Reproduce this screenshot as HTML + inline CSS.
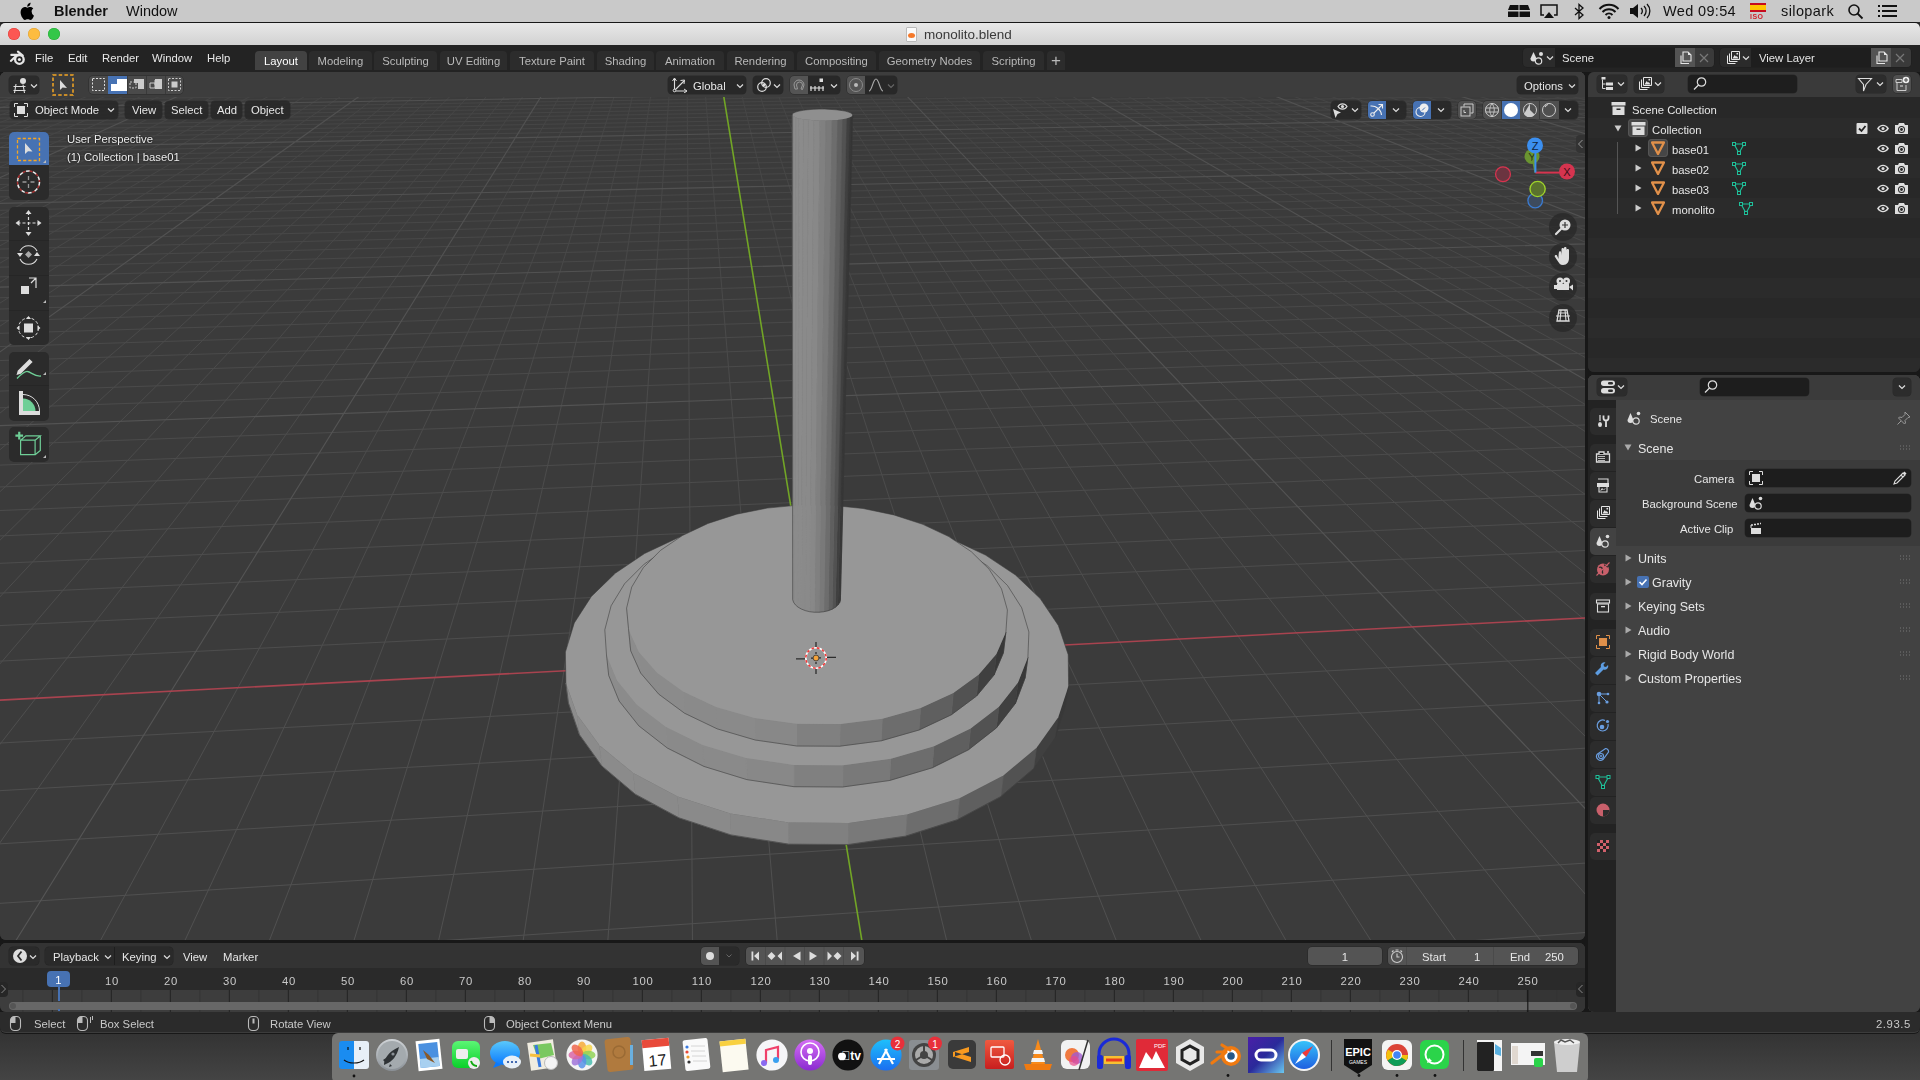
<!DOCTYPE html>
<html><head><meta charset="utf-8">
<style>
*{box-sizing:border-box}
html,body{margin:0;padding:0}
body{width:1920px;height:1080px;position:relative;overflow:hidden;background:#3b3b3b;font-family:"Liberation Sans",sans-serif;font-size:12px;color:#e6e6e6}
.a{position:absolute}
.t{position:absolute;white-space:nowrap;line-height:1}
.mb{position:absolute;white-space:nowrap;line-height:1;font-size:14px;color:#111;top:4px}
.tb{position:absolute;white-space:nowrap;line-height:1;font-size:11.3px;color:#e8e8e8;top:53px}
.tab{position:absolute;top:51px;height:19px;background:#2c2c2c;border-radius:4px 4px 0 0;color:#b9b9b9;font-size:11.3px;text-align:center;line-height:20px;white-space:nowrap}
.bt{position:absolute;background:#2b2b2b;border-radius:4px;box-shadow:0 0 0 .5px rgba(24,24,24,.5)}
.ic{position:absolute}
.t,.tb,.mb,.tab{will-change:transform}
</style></head><body>
<!-- desktop -->
<div class="a" style="left:0;top:0;width:1920px;height:1080px;background:linear-gradient(180deg,#2e2e2e 0,#333 1033px,#444 1080px)"></div>
<!-- mac menubar -->
<div class="a" id="menubar" style="left:0;top:0;width:1920px;height:22px;background:#c9c9c9"></div>
<svg class="ic" style="left:20px;top:2px" width="16" height="18" viewBox="0 0 16 18"><path d="M11.6 9.6c0-2 1.6-2.9 1.7-3-1-1.4-2.4-1.6-2.9-1.6-1.2-.1-2.4.7-3 .7-.6 0-1.6-.7-2.6-.7C3.400 5.1 2 6 1.3 7.300c-1.5 2.600-.4 6.400 1.100 8.500.7 1 1.500 2.200 2.600 2.100 1-.1 1.400-.7 2.700-.7s1.600.7 2.700.7c1.100 0 1.800-1 2.500-2 .8-1.100 1.100-2.200 1.100-2.300 0 0-2.200-.8-2.200-3.300zM9.700 3.500c.6-.7 1-1.700.9-2.700-.8 0-1.900.6-2.500 1.300-.6.600-1 1.600-.9 2.600.9.1 1.900-.5 2.500-1.200z" fill="#000"/></svg>
<div class="mb" style="left:54px;font-weight:bold;font-size:14.5px">Blender</div>
<div class="mb" style="left:126px;font-size:14.5px">Window</div>
<!-- right menubar icons -->
<svg class="ic" style="left:1507px;top:4px" width="24" height="14" viewBox="0 0 24 14"><path d="M3 1h18l2 5H1z M1 7h22v6H1z" fill="#111"/><path d="M12 1v12 M1 7h22" stroke="#cbcbcb" stroke-width="1"/></svg>
<svg class="ic" style="left:1539px;top:4px" width="20" height="15" viewBox="0 0 20 15"><path d="M5 11H2V1h16v10h-3" fill="none" stroke="#111" stroke-width="1.5"/><path d="M10 8l5 6H5z" fill="#111"/></svg>
<svg class="ic" style="left:1573px;top:3px" width="12" height="17" viewBox="0 0 12 17"><path d="M2 5l8 7-4 3.5V1.5l4 3.5-8 7" fill="none" stroke="#111" stroke-width="1.3"/></svg>
<svg class="ic" style="left:1598px;top:3px" width="22" height="16" viewBox="0 0 22 16"><path d="M1.5 6a13 13 0 0 1 19 0M4.5 9a9 9 0 0 1 13 0M7.5 12a5 5 0 0 1 7 0" fill="none" stroke="#111" stroke-width="2"/><circle cx="11" cy="14.5" r="1.5" fill="#111"/></svg>
<svg class="ic" style="left:1629px;top:3px" width="22" height="16" viewBox="0 0 22 16"><path d="M1 5h3l5-4v14l-5-4H1z" fill="#111"/><path d="M12 5a4 4 0 0 1 0 6M15 3a7 7 0 0 1 0 10M18 1a10 10 0 0 1 0 14" fill="none" stroke="#111" stroke-width="1.3"/></svg>
<div class="mb" style="left:1663px;font-size:14.5px;letter-spacing:.35px">Wed 09:54</div>
<div class="a" style="left:1750px;top:3px;width:16px;height:9px;background:linear-gradient(#c60b1e 25%,#ffc400 25%,#ffc400 75%,#c60b1e 75%)"></div>
<div class="t" style="left:1750px;top:13px;font-size:7px;color:#d0202a;font-weight:bold;letter-spacing:.5px">ISO</div>
<div class="mb" style="left:1781px;font-size:14.5px;letter-spacing:.4px">silopark</div>
<svg class="ic" style="left:1847px;top:3px" width="17" height="17" viewBox="0 0 17 17"><circle cx="7" cy="7" r="5" fill="none" stroke="#111" stroke-width="1.6"/><path d="M10.5 10.5l5 5" stroke="#111" stroke-width="1.8"/></svg>
<svg class="ic" style="left:1878px;top:4px" width="19" height="14" viewBox="0 0 19 14"><path d="M0 2h2M4 2h15M0 7h2M4 7h15M0 12h2M4 12h15" stroke="#111" stroke-width="2"/></svg>

<!-- window -->
<div class="a" id="win" style="left:0;top:22px;width:1920px;height:1012px;background:#181818;border-radius:5px 5px 6px 6px;overflow:hidden">
  <div class="a" id="titlebar" style="left:0;top:1px;width:1920px;height:22px;background:linear-gradient(#e8e8e8,#d2d2d2);border-radius:5px 5px 0 0"></div>
  <div class="a" style="left:8px;top:6px;width:12px;height:12px;border-radius:50%;background:#fc5753;box-shadow:inset 0 0 0 .5px #df3d38"></div>
  <div class="a" style="left:28px;top:6px;width:12px;height:12px;border-radius:50%;background:#fdbc40;box-shadow:inset 0 0 0 .5px #de9f34"></div>
  <div class="a" style="left:48px;top:6px;width:12px;height:12px;border-radius:50%;background:#33c748;box-shadow:inset 0 0 0 .5px #27aa35"></div>
  <div class="a" style="left:906px;top:5px;width:11px;height:15px;background:#fafafa;border:1px solid #bbb;border-radius:1px"></div>
  <div class="a" style="left:908px;top:11px;width:7px;height:5px;border-radius:50%;background:#f5792a"></div>
  <div class="t" style="left:924px;top:6px;font-size:13.5px;color:#3a3a3a">monolito.blend</div>
  <div class="a" id="topbar" style="left:0;top:23px;width:1920px;height:27px;background:#232323"></div>
<!--TOPBAR-->
  <div class="a" id="viewport" style="left:0;top:50px;width:1585px;height:868px;background:#393939;border-radius:6px;overflow:hidden">
<svg class="a" style="left:0;top:0" width="1585" height="868" viewBox="0 72 1585 868">
<defs><linearGradient id="gmin" gradientUnits="userSpaceOnUse" x1="0" y1="72" x2="0" y2="940"><stop offset="0" stop-color="#444444"/><stop offset="0.35" stop-color="#4a4a4a"/><stop offset="1" stop-color="#505050"/></linearGradient><linearGradient id="gmaj" gradientUnits="userSpaceOnUse" x1="0" y1="72" x2="0" y2="940"><stop offset="0" stop-color="#505050"/><stop offset="0.4" stop-color="#535353"/><stop offset="1" stop-color="#555555"/></linearGradient></defs>
<rect x="0" y="72" width="1585" height="868" fill="#3b3b3b"/>
<path d="M-964.5 47L52574.7 -5891.3M-948.9 46.8L53585.6 -6053M-933.4 46.6L54655.4 -6224.2M-917.9 46.4L55789.3 -6405.6M-902.5 46.2L56993.2 -6598.3M-887 46L58273.9 -6803.2M-871.6 45.8L59639 -7021.6M-856.2 45.6L61097.1 -7254.9M-840.9 45.5L62657.9 -7504.6M-810.3 45.1L66134.9 -8060.9M-795 44.9L68079 -8372M-779.7 44.7L70182.7 -8708.5M-764.5 44.5L72466.4 -9073.9M-749.3 44.3L74954.4 -9472M-734.1 44.1L77675.3 -9907.3M-719 44L80663.4 -10385.4M-703.9 43.8L83960.2 -10912.9M-688.8 43.6L87616 -11497.8M-658.7 43.2L96267.9 -12882.1M-643.7 43L101438.6 -13709.4M-628.7 42.9L107329.1 -14651.9M-613.7 42.7L114101.2 -15735.4M-598.8 42.5L121968.8 -16994.2M-583.9 42.3L131220.9 -18474.5M-569 42.1L142258.4 -20240.5M-554.1 41.9L155653.2 -22383.6M-539.3 41.8L172250.9 -25039.2M-509.7 41.4L221093.6 -32854M-494.9 41.2L259172.5 -38946.5M-480.2 41L314701.3 -47831M-465.5 40.9L403239.9 -61996.9M-450.8 40.7L566672.4 -88145.8M-436.1 40.5L969675.8 -152625.4M-421.5 40.3L3584697.8 -571023M-406.9 40.1L-2028486.4 327073.8M-392.3 40L-778009.1 127000.2M-363.2 39.6L-340761.9 57041.7M-348.7 39.4L-263623.2 44699.6M-334.2 39.2L-213859.9 36737.6M-319.8 39.1L-179095.4 31175.4M-305.3 38.9L-153436.8 27070.1M-290.9 38.7L-133720.7 23915.5M-276.5 38.5L-118096.9 21415.8M-262.2 38.4L-105411.1 19386.1M-247.8 38.2L-94905.9 17705.3M-219.2 37.8L-78517.9 15083.2M-204.9 37.7L-72003.5 14040.9M-190.7 37.5L-66322.4 13132M-176.5 37.3L-61324.3 12332.3M-162.3 37.1L-56893.1 11623.3M-148.1 37L-52937.3 10990.4M-133.9 36.8L-49384.5 10421.9M-119.8 36.6L-46176.1 9908.6M-105.7 36.4L-43264.2 9442.7M-77.6 36.1L-38179.6 8629.2M-63.5 35.9L-35947 8272M-49.5 35.7L-33888.5 7942.6M-35.5 35.6L-31984.5 7638M-21.6 35.4L-30218.4 7355.4M-7.6 35.2L-28575.6 7092.6M6.3 35.1L-27043.6 6847.5M20.2 34.9L-25611.7 6618.3M34 34.7L-24270.3 6403.7M61.7 34.4L-21826.8 6012.8M75.5 34.2L-20710.9 5834.2M89.3 34L-19657.6 5665.7M103.1 33.9L-18661.8 5506.4M116.8 33.7L-17718.9 5355.5M130.5 33.5L-16824.8 5212.5M144.2 33.4L-15975.9 5076.6M157.9 33.2L-15168.7 4947.5M171.5 33L-14400.3 4824.5M198.7 32.7L-12969.2 4595.6M212.3 32.5L-12301.7 4488.8M225.9 32.4L-11663.5 4386.7M239.4 32.2L-11052.6 4288.9M252.9 32L-10467.4 4195.3M266.4 31.9L-9906.3 4105.5M279.9 31.7L-9367.7 4019.3M293.3 31.5L-8850.5 3936.6M306.7 31.4L-8353.2 3857M333.5 31L-7414.4 3706.8M346.9 30.9L-6970.8 3635.8M360.2 30.7L-6543.1 3567.4M373.5 30.6L-6130.5 3501.4M386.8 30.4L-5732.2 3437.7M400.1 30.2L-5347.5 3376.1M413.4 30.1L-4975.7 3316.6M426.6 29.9L-4616.2 3259.1M439.8 29.7L-4268.4 3203.5M466.1 29.4L-3605.5 3097.4M479.3 29.3L-3289.4 3046.8M492.4 29.1L-2982.9 2997.8M505.5 28.9L-2685.7 2950.2M518.6 28.8L-2397.2 2904.1M531.7 28.6L-2117.2 2859.3M544.7 28.5L-1845.2 2815.8M557.7 28.3L-1580.9 2773.5M570.7 28.1L-1324 2732.4M596.7 27.8L-831 2653.5M609.6 27.7L-594.5 2615.6M622.5 27.5L-364.2 2578.8M635.4 27.3L-139.9 2542.9M648.3 27.2L78.6 2508M661.1 27L291.6 2473.9M674 26.9L499.2 2440.7M686.8 26.7L701.6 2408.3M699.6 26.6L899.1 2376.7M725.1 26.2L1279.9 2315.7M737.8 26.1L1463.6 2286.4M750.5 25.9L1643 2257.7M763.2 25.8L1818.2 2229.6M775.9 25.6L1989.4 2202.2M788.6 25.5L2156.8 2175.5M801.2 25.3L2320.4 2149.3M813.8 25.2L2480.4 2123.7M826.4 25L2637 2098.6M851.5 24.7L2940 2050.1M864.1 24.5L3086.7 2026.7M876.6 24.4L3230.3 2003.7M889.1 24.2L3371 1981.2M901.5 24.1L3508.8 1959.1M914 23.9L3643.8 1937.5M926.4 23.8L3776.1 1916.4M938.8 23.6L3905.7 1895.6M951.2 23.5L4032.8 1875.3M976 23.2L4279.7 1835.8M988.3 23L4399.6 1816.6M1000.6 22.9L4517.2 1797.8M1012.9 22.7L4632.6 1779.3M1025.2 22.6L4745.9 1761.2M1037.5 22.4L4857.1 1743.4M1049.7 22.3L4966.2 1725.9M1061.9 22.1L5073.4 1708.8M1074.1 22L5178.7 1692M1098.5 21.7L5383.6 1659.2M1110.7 21.5L5483.4 1643.2M1122.8 21.4L5581.5 1627.5M1134.9 21.2L5677.9 1612.1M1147 21.1L5772.6 1596.9M1159.1 20.9L5865.8 1582M1171.1 20.8L5957.4 1567.4M1183.2 20.6L6047.5 1553M1195.2 20.5L6136.1 1538.8M1219.2 20.2L6309 1511.1M1231.1 20L6393.3 1497.6M1243.1 19.9L6476.3 1484.3M1255 19.7L6558.1 1471.3M1266.9 19.6L6638.5 1458.4M1278.8 19.5L6717.7 1445.7M1290.7 19.3L6795.6 1433.2M1302.5 19.2L6872.4 1421M1314.3 19L6948 1408.9M1338 18.7L7095.8 1385.2M1349.7 18.6L7168.1 1373.7M1361.5 18.4L7239.3 1362.3M1373.3 18.3L7309.4 1351M1385 18.1L7378.5 1340M1396.7 18L7446.7 1329.1M1408.4 17.9L7513.8 1318.3M1420.1 17.7L7580 1307.7M1431.7 17.6L7645.3 1297.3M1455 17.3L7773.1 1276.9M1466.6 17.1L7835.7 1266.8M1478.2 17L7897.4 1257M1489.7 16.9L7958.3 1247.2M1501.3 16.7L8018.3 1237.6M1512.8 16.6L8077.6 1228.1M1524.3 16.4L8136 1218.8M1535.8 16.3L8193.7 1209.6M1547.3 16.2L8250.6 1200.5M1570.2 15.9L8362.2 1182.6M1581.7 15.7L8416.9 1173.8M1593.1 15.6L8471 1165.2M1604.5 15.5L8524.3 1156.7M1615.9 15.3L8576.9 1148.2M1627.2 15.2L8628.9 1139.9M1638.6 15L8680.3 1131.7M1649.9 14.9L8731 1123.6M1661.2 14.8L8781 1115.6M1683.8 14.5L8879.3 1099.9M1695.1 14.3L8927.6 1092.1M1706.3 14.2L8975.3 1084.5M1717.5 14.1L9022.4 1077M1728.7 13.9L9068.9 1069.5M1739.9 13.8L9114.9 1062.2M1751.1 13.7L9160.3 1054.9M1762.3 13.5L9205.3 1047.7M1773.4 13.4L9249.6 1040.6M1795.7 13.1L9336.9 1026.6M1806.8 13L9379.8 1019.8M1817.8 12.8L9422.1 1013M1828.9 12.7L9464.1 1006.3M1839.9 12.6L9505.5 999.7M1851 12.4L9546.5 993.1M1862 12.3L9587 986.6M1873 12.2L9627 980.2M1884 12L9666.7 973.9M1905.9 11.8L9744.6 961.4M1916.8 11.6L9783 955.3M1927.7 11.5L9820.9 949.2M1938.6 11.4L9858.4 943.2M1949.5 11.2L9895.5 937.3M1960.4 11.1L9932.3 931.4M1971.2 11L9968.6 925.6M1982.1 10.8L10004.6 919.8M1992.9 10.7L10040.2 914.1M2014.5 10.4L10110.2 902.9M2025.3 10.3L10144.7 897.4M2036 10.2L10178.9 891.9M2046.8 10L10212.7 886.5M2057.5 9.9L10246.1 881.2M2068.2 9.8L10279.2 875.9M2078.9 9.6L10312 870.6M2089.6 9.5L10344.5 865.4M2100.3 9.4L10376.6 860.3M-1484.7 55.2L2439 6.7M-1509.7 57.4L2454.9 8M-1535.4 59.7L2471 9.3M-1561.6 62L2487.5 10.6M-1588.5 64.4L2504.2 12M-1616 66.8L2521.3 13.4M-1644.2 69.3L2538.7 14.8M-1673.1 71.8L2556.4 16.2M-1702.7 74.4L2574.5 17.7M-1764.3 79.9L2611.7 20.7M-1796.2 82.7L2630.8 22.3M-1829.1 85.6L2650.4 23.9M-1862.8 88.5L2670.3 25.5M-1897.4 91.6L2690.7 27.2M-1932.9 94.7L2711.4 28.9M-1969.5 97.9L2732.6 30.6M-2007.1 101.3L2754.3 32.3M-2045.8 104.7L2776.4 34.1M-2126.5 111.8L2822.1 37.9M-2168.7 115.5L2845.7 39.8M-2212.2 119.3L2869.8 41.7M-2257.1 123.3L2894.5 43.8M-2303.3 127.4L2919.7 45.8M-2351 131.6L2945.5 47.9M-2400.3 135.9L2971.9 50.1M-2451.2 140.4L2999 52.3M-2503.8 145L3026.7 54.5M-2614.5 154.8L3084.1 59.2M-2672.8 159.9L3113.9 61.6M-2733.1 165.2L3144.4 64.1M-2795.7 170.8L3175.7 66.7M-2860.6 176.5L3207.8 69.3M-2928 182.4L3240.8 71.9M-2998 188.6L3274.6 74.7M-3070.8 195L3309.3 77.5M-3146.5 201.7L3345 80.4M-3307.4 215.8L3419.4 86.5M-3393 223.4L3458.1 89.6M-3482.4 231.3L3498 92.9M-3575.8 239.5L3539 96.2M-3673.4 248.1L3581.3 99.7M-3775.7 257.1L3624.8 103.2M-3882.8 266.6L3669.6 106.9M-3995.3 276.5L3715.9 110.6M-4113.4 286.9L3763.6 114.5M-4368.4 309.4L3863.6 122.7M-4506.4 321.5L3916.1 126.9M-4652.1 334.4L3970.4 131.3M-4806.2 347.9L4026.5 135.9M-4969.5 362.3L4084.5 140.6M-5142.8 377.6L4144.6 145.5M-5327.1 393.8L4206.9 150.6M-5523.4 411.1L4271.5 155.9M-5732.9 429.6L4338.5 161.3M-6197.5 470.5L4480.2 172.9M-6456 493.3L4555.3 179M-6734.6 517.9L4633.4 185.3M-7035.8 544.4L4714.8 191.9M-7362.5 573.2L4799.5 198.8M-7718.2 604.6L4887.9 206M-8106.6 638.8L4980.2 213.6M-8532.8 676.3L5076.6 221.4M-9002.3 717.7L5177.5 229.6M-10101.2 814.6L5393.8 247.2M-10749.7 871.7L5509.9 256.7M-11481.3 936.2L5631.9 266.6M-12312.8 1009.5L5760.3 277.1M-13266.2 1093.5L5895.5 288.1M-14370.7 1190.8L6038.1 299.7M-15665 1304.9L6188.7 311.9M-17202.8 1440.4L6348 324.9M-19059.9 1604.1L6516.9 338.7M-24233.9 2060L6886.7 368.8M-27991 2391.1L7089.8 385.3M-33082.1 2839.8L7306.6 403M-40371.2 3482.2L7538.6 421.8M-51673.4 4478.2L7787.5 442.1M-71561.7 6230.9L8055.1 463.9M-115813.1 10130.7L8343.7 487.4M-299954.8 26358.7L8655.8 512.8M518468.9 -45767L8994.5 540.4M81030.3 -7216.6L9766.1 603.2M57170.4 -5113.9L10208.3 639.2M44237 -3974.1L10695.7 678.9M36122.9 -3259L11235.8 722.8" stroke="url(#gmin)" stroke-width="1" fill="none"/>
<path d="M-980.1 47.2L51617.9 -5738.2M-825.6 45.3L64332.9 -7772.6M-673.7 43.4L91692.8 -12150.1M-524.5 41.6L193356.1 -28416M-377.8 39.8L-476436 78749.2M-233.5 38L-86063.4 16290.5M-91.6 36.3L-40609.6 9018M47.9 34.6L-23011.1 6202.3M185.1 32.9L-13668 4707.4M320.1 31.2L-7874.9 3780.5M453 29.6L-3931.6 3149.6M583.7 28L-1074.1 2692.4M839 24.8L2790.1 2074.1M963.6 23.3L4157.5 1855.3M1086.3 21.8L5282 1675.4M1207.2 20.3L6223.2 1524.8M1326.2 18.9L7022.5 1397M1443.4 17.4L7709.6 1287M1558.8 16L8306.8 1191.5M1672.5 14.6L8830.5 1107.7M1784.5 13.2L9293.5 1033.6M1894.9 11.9L9705.8 967.6M2003.7 10.6L10075.4 908.5M2110.9 9.2L10408.4 855.2M-1460.2 53.1L2423.4 5.4M-1733.1 77.1L2592.9 19.2M-2085.6 108.2L2799 36M-2558.2 149.8L3055 56.8M-3225.3 208.6L3381.7 83.4M-4237.6 297.8L3812.8 118.5M-5957.1 449.4L4408 167M-9522.3 763.5L5283.1 238.2M139790 -12395L9363.2 570.4" stroke="url(#gmaj)" stroke-width="1.1" fill="none"/>
<path d="M-21347.2 1805.6L6696.1 353.3" stroke="#a8434f" stroke-width="1.6" fill="none"/>
<path d="M712.3 26.4L1091.8 2345.8" stroke="#72a526" stroke-width="1.6" fill="none"/>
<path d="M1065.4 705.8L1055.2 737.8L1058.3 717.3L1068.6 685.8Z" fill="rgb(56,56,56)" stroke="rgb(56,56,56)" stroke-width="0.6"/>
<path d="M1055.2 737.8L1033.6 768.6L1036.6 747.8L1058.3 717.3Z" fill="rgb(64,64,64)" stroke="rgb(64,64,64)" stroke-width="0.6"/>
<path d="M1033.6 768.6L1000.8 796.5L1003.4 775.5L1036.6 747.8Z" fill="rgb(82,82,82)" stroke="rgb(82,82,82)" stroke-width="0.6"/>
<path d="M1000.8 796.5L957.5 819.6L959.6 798.3L1003.4 775.5Z" fill="rgb(95,95,95)" stroke="rgb(95,95,95)" stroke-width="0.6"/>
<path d="M957.5 819.6L905.6 836.1L907.1 814.6L959.6 798.3Z" fill="rgb(109,109,109)" stroke="rgb(109,109,109)" stroke-width="0.6"/>
<path d="M905.6 836.1L848.2 844.5L848.9 822.9L907.1 814.6Z" fill="rgb(121,121,121)" stroke="rgb(121,121,121)" stroke-width="0.6"/>
<path d="M848.2 844.5L788.7 844.1L788.6 822.5L848.9 822.9Z" fill="rgb(128,128,128)" stroke="rgb(128,128,128)" stroke-width="0.6"/>
<path d="M788.7 844.1L731.1 834.9L730.3 813.4L788.6 822.5Z" fill="rgb(136,136,136)" stroke="rgb(136,136,136)" stroke-width="0.6"/>
<path d="M731.1 834.9L679 817.8L677.5 796.5L730.3 813.4Z" fill="rgb(138,138,138)" stroke="rgb(138,138,138)" stroke-width="0.6"/>
<path d="M679 817.8L635.3 794.2L633.2 773.1L677.5 796.5Z" fill="rgb(138,138,138)" stroke="rgb(138,138,138)" stroke-width="0.6"/>
<path d="M635.3 794.2L601.8 765.9L599.4 745.2L633.2 773.1Z" fill="rgb(139,139,139)" stroke="rgb(139,139,139)" stroke-width="0.6"/>
<path d="M601.8 765.9L579.6 734.9L577 714.5L599.4 745.2Z" fill="rgb(139,139,139)" stroke="rgb(139,139,139)" stroke-width="0.6"/>
<path d="M579.6 734.9L568.5 703L565.9 683L577 714.5Z" fill="rgb(140,140,140)" stroke="rgb(140,140,140)" stroke-width="0.6"/>
<path d="M1068.2 654.7L1068.6 685.8L1058.3 717.3L1036.6 747.8L1003.4 775.5L959.6 798.3L907.1 814.6L848.9 822.9L788.6 822.5L730.3 813.4L677.5 796.5L633.2 773.1L599.4 745.2L577 714.5L565.9 683L565.4 652.1L574.3 622.9L591.4 596.4L615.3 573.2L644.6 553.5L678.1 537.7L714.8 525.8L753.7 517.9L793.9 514.1L834.5 514.3L874.9 518.5L914.1 526.7L951.3 538.9L985.5 555.1L1015.5 575L1040.2 598.6L1058.3 625.4Z" fill="rgb(151,151,151)"/>
<path d="M905.6 836.1L848.2 844.5L788.7 844.1L731.1 834.9L679 817.8L635.3 794.2L601.8 765.9L579.6 734.9L568.5 703L565.9 683L565.4 652.1L574.3 622.9L591.4 596.4L615.3 573.2L644.6 553.5L678.1 537.7L714.8 525.8L753.7 517.9L793.9 514.1L834.5 514.3L874.9 518.5L914.1 526.7L951.3 538.9L985.5 555.1L1015.5 575L1040.2 598.6L1058.3 625.4L1068.2 654.7L1068.6 685.8L1065.4 705.8L1055.2 737.8L1033.6 768.6L1000.8 796.5L957.5 819.6Z" fill="none" stroke="#3a3a3a" stroke-width="1" stroke-opacity="0.55"/>
<path d="M1025.2 677.7L1015.4 703.4L1018 682.6L1027.9 657.3Z" fill="rgb(56,56,56)" stroke="rgb(56,56,56)" stroke-width="0.6"/>
<path d="M1015.4 703.4L996.4 727.9L998.9 706.8L1018 682.6Z" fill="rgb(64,64,64)" stroke="rgb(64,64,64)" stroke-width="0.6"/>
<path d="M996.4 727.9L968.4 749.8L970.6 728.5L998.9 706.8Z" fill="rgb(82,82,82)" stroke="rgb(82,82,82)" stroke-width="0.6"/>
<path d="M968.4 749.8L932.2 767.8L934 746.3L970.6 728.5Z" fill="rgb(95,95,95)" stroke="rgb(95,95,95)" stroke-width="0.6"/>
<path d="M932.2 767.8L889.5 780.5L890.8 758.8L934 746.3Z" fill="rgb(109,109,109)" stroke="rgb(109,109,109)" stroke-width="0.6"/>
<path d="M889.5 780.5L842.5 787L843.1 765.2L890.8 758.8Z" fill="rgb(121,121,121)" stroke="rgb(121,121,121)" stroke-width="0.6"/>
<path d="M842.5 787L794 786.7L794 764.9L843.1 765.2Z" fill="rgb(128,128,128)" stroke="rgb(128,128,128)" stroke-width="0.6"/>
<path d="M794 786.7L746.8 779.6L746.2 757.9L794 764.9Z" fill="rgb(136,136,136)" stroke="rgb(136,136,136)" stroke-width="0.6"/>
<path d="M746.8 779.6L703.9 766.4L702.7 744.9L746.2 757.9Z" fill="rgb(138,138,138)" stroke="rgb(138,138,138)" stroke-width="0.6"/>
<path d="M703.9 766.4L667.3 748L665.7 726.7L702.7 744.9Z" fill="rgb(138,138,138)" stroke="rgb(138,138,138)" stroke-width="0.6"/>
<path d="M667.3 748L638.8 725.8L636.9 704.7L665.7 726.7Z" fill="rgb(139,139,139)" stroke="rgb(139,139,139)" stroke-width="0.6"/>
<path d="M638.8 725.8L619.2 701.1L617.1 680.4L636.9 704.7Z" fill="rgb(139,139,139)" stroke="rgb(139,139,139)" stroke-width="0.6"/>
<path d="M619.2 701.1L608.7 675.4L606.5 655L617.1 680.4Z" fill="rgb(140,140,140)" stroke="rgb(140,140,140)" stroke-width="0.6"/>
<path d="M1028.9 632L1027.9 657.3L1018 682.6L998.9 706.8L970.6 728.5L934 746.3L890.8 758.8L843.1 765.2L794 764.9L746.2 757.9L702.7 744.9L665.7 726.7L636.9 704.7L617.1 680.4L606.5 655L604.8 629.8L611.1 605.8L624.6 583.7L644.2 564.1L668.7 547.4L697.1 533.9L728.6 523.7L762.2 516.9L797 513.5L832.3 513.7L867.3 517.3L901.1 524.4L933 534.9L962 548.7L987.2 565.7L1007.5 585.5L1021.7 607.8Z" fill="rgb(151,151,151)"/>
<path d="M619.2 701.1L608.7 675.4L606.5 655L604.8 629.8L611.1 605.8L624.6 583.7L644.2 564.1L668.7 547.4L697.1 533.9L728.6 523.7L762.2 516.9L797 513.5L832.3 513.7L867.3 517.3L901.1 524.4L933 534.9L962 548.7L987.2 565.7L1007.5 585.5L1021.7 607.8L1028.9 632L1027.9 657.3L1025.2 677.7L1015.4 703.4L996.4 727.9L968.4 749.8L932.2 767.8L889.5 780.5L842.5 787L794 786.7L746.8 779.6L703.9 766.4L667.3 748L638.8 725.8Z" fill="none" stroke="#3a3a3a" stroke-width="1" stroke-opacity="0.55"/>
<path d="M1003.4 652.8L994 675L996.4 653.9L1005.9 632Z" fill="rgb(56,56,56)" stroke="rgb(56,56,56)" stroke-width="0.6"/>
<path d="M994 675L976.6 696L978.8 674.6L996.4 653.9Z" fill="rgb(64,64,64)" stroke="rgb(64,64,64)" stroke-width="0.6"/>
<path d="M976.6 696L951.3 714.8L953.3 693.1L978.8 674.6Z" fill="rgb(82,82,82)" stroke="rgb(82,82,82)" stroke-width="0.6"/>
<path d="M951.3 714.8L919 730L920.6 708.1L953.3 693.1Z" fill="rgb(95,95,95)" stroke="rgb(95,95,95)" stroke-width="0.6"/>
<path d="M919 730L881.2 740.8L882.3 718.7L920.6 708.1Z" fill="rgb(109,109,109)" stroke="rgb(109,109,109)" stroke-width="0.6"/>
<path d="M881.2 740.8L839.7 746.2L840.3 724.1L882.3 718.7Z" fill="rgb(121,121,121)" stroke="rgb(121,121,121)" stroke-width="0.6"/>
<path d="M839.7 746.2L796.9 746L796.9 723.8L840.3 724.1Z" fill="rgb(128,128,128)" stroke="rgb(128,128,128)" stroke-width="0.6"/>
<path d="M796.9 746L755.2 740L754.7 718L796.9 723.8Z" fill="rgb(136,136,136)" stroke="rgb(136,136,136)" stroke-width="0.6"/>
<path d="M755.2 740L717.1 728.8L716.1 706.9L754.7 718Z" fill="rgb(138,138,138)" stroke="rgb(138,138,138)" stroke-width="0.6"/>
<path d="M717.1 728.8L684.5 713.2L683.1 691.5L716.1 706.9Z" fill="rgb(138,138,138)" stroke="rgb(138,138,138)" stroke-width="0.6"/>
<path d="M684.5 713.2L658.8 694.2L657.1 672.8L683.1 691.5Z" fill="rgb(139,139,139)" stroke="rgb(139,139,139)" stroke-width="0.6"/>
<path d="M658.8 694.2L640.7 673.1L638.9 652L657.1 672.8Z" fill="rgb(139,139,139)" stroke="rgb(139,139,139)" stroke-width="0.6"/>
<path d="M640.7 673.1L630.7 650.8L628.8 630.1L638.9 652Z" fill="rgb(140,140,140)" stroke="rgb(140,140,140)" stroke-width="0.6"/>
<path d="M630.7 650.8L628.5 628.6L626.6 608.1L628.8 630.1Z" fill="rgb(140,140,140)" stroke="rgb(140,140,140)" stroke-width="0.6"/>
<path d="M1007.4 610L1005.9 632L996.4 653.9L978.8 674.6L953.3 693.1L920.6 708.1L882.3 718.7L840.3 724.1L796.9 723.8L754.7 718L716.1 706.9L683.1 691.5L657.1 672.8L638.9 652L628.8 630.1L626.6 608.1L631.7 587.1L643.3 567.7L660.6 550.3L682.5 535.5L708.1 523.4L736.6 514.2L767.2 508.1L798.9 505.1L831.1 505.2L863 508.5L893.8 514.9L922.7 524.3L948.8 536.6L971.3 551.7L989.2 569.3L1001.5 588.9Z" fill="rgb(151,151,151)"/>
<path d="M640.7 673.1L630.7 650.8L628.5 628.6L626.6 608.1L631.7 587.1L643.3 567.7L660.6 550.3L682.5 535.5L708.1 523.4L736.6 514.2L767.2 508.1L798.9 505.1L831.1 505.2L863 508.5L893.8 514.9L922.7 524.3L948.8 536.6L971.3 551.7L989.2 569.3L1001.5 588.9L1007.4 610L1005.9 632L1003.4 652.8L994 675L976.6 696L951.3 714.8L919 730L881.2 740.8L839.7 746.2L796.9 746L755.2 740L717.1 728.8L684.5 713.2L658.8 694.2Z" fill="none" stroke="#3a3a3a" stroke-width="1" stroke-opacity="0.55"/>
<path d="M840.4 599.9L839.6 602.5L851.6 116.4L852.6 115.3Z" fill="rgb(50,50,50)" stroke="rgb(50,50,50)" stroke-width="0.6"/>
<path d="M839.6 602.5L837.9 605L849.5 117.5L851.6 116.4Z" fill="rgb(56,56,56)" stroke="rgb(56,56,56)" stroke-width="0.6"/>
<path d="M837.9 605L835.4 607.2L846.4 118.4L849.5 117.5Z" fill="rgb(64,64,64)" stroke="rgb(64,64,64)" stroke-width="0.6"/>
<path d="M835.4 607.2L832.1 609.2L842.2 119.2L846.4 118.4Z" fill="rgb(82,82,82)" stroke="rgb(82,82,82)" stroke-width="0.6"/>
<path d="M832.1 609.2L828.2 610.7L837.3 119.9L842.2 119.2Z" fill="rgb(95,95,95)" stroke="rgb(95,95,95)" stroke-width="0.6"/>
<path d="M828.2 610.7L823.8 611.7L831.8 120.3L837.3 119.9Z" fill="rgb(109,109,109)" stroke="rgb(109,109,109)" stroke-width="0.6"/>
<path d="M823.8 611.7L819.1 612.2L825.8 120.5L831.8 120.3Z" fill="rgb(121,121,121)" stroke="rgb(121,121,121)" stroke-width="0.6"/>
<path d="M819.1 612.2L814.4 612.2L819.8 120.5L825.8 120.5Z" fill="rgb(128,128,128)" stroke="rgb(128,128,128)" stroke-width="0.6"/>
<path d="M814.4 612.2L809.7 611.7L813.8 120.3L819.8 120.5Z" fill="rgb(136,136,136)" stroke="rgb(136,136,136)" stroke-width="0.6"/>
<path d="M809.7 611.7L805.3 610.6L808.2 119.8L813.8 120.3Z" fill="rgb(138,138,138)" stroke="rgb(138,138,138)" stroke-width="0.6"/>
<path d="M805.3 610.6L801.3 609L803.2 119.2L808.2 119.8Z" fill="rgb(138,138,138)" stroke="rgb(138,138,138)" stroke-width="0.6"/>
<path d="M801.3 609L798 607.1L798.9 118.4L803.2 119.2Z" fill="rgb(139,139,139)" stroke="rgb(139,139,139)" stroke-width="0.6"/>
<path d="M798 607.1L795.4 604.8L795.6 117.4L798.9 118.4Z" fill="rgb(139,139,139)" stroke="rgb(139,139,139)" stroke-width="0.6"/>
<path d="M795.4 604.8L793.6 602.3L793.4 116.3L795.6 117.4Z" fill="rgb(140,140,140)" stroke="rgb(140,140,140)" stroke-width="0.6"/>
<path d="M793.6 602.3L792.7 599.6L792.3 115.2L793.4 116.3Z" fill="rgb(140,140,140)" stroke="rgb(140,140,140)" stroke-width="0.6"/>
<path d="M852.6 115.3L851.6 116.4L849.5 117.5L846.4 118.4L842.2 119.2L837.3 119.9L831.8 120.3L825.8 120.5L819.8 120.5L813.8 120.3L808.2 119.8L803.2 119.2L798.9 118.4L795.6 117.4L793.4 116.3L792.3 115.2L792.3 114.1L793.5 113L795.8 112L799.1 111.1L803.2 110.3L808.1 109.7L813.4 109.3L819.1 109.1L824.9 109.1L830.6 109.4L836 109.8L840.9 110.4L845.1 111.1L848.5 112.1L851 113.1L852.3 114.2Z" fill="rgb(143,143,143)"/>
<path d="M792.7 599.6L792.3 115.2L792.3 114.1L793.5 113L795.8 112L799.1 111.1L803.2 110.3L808.1 109.7L813.4 109.3L819.1 109.1L824.9 109.1L830.6 109.4L836 109.8L840.9 110.4L845.1 111.1L848.5 112.1L851 113.1L852.3 114.2L852.6 115.3L840.4 599.9L839.6 602.5L837.9 605L835.4 607.2L832.1 609.2L828.2 610.7L823.8 611.7L819.1 612.2L814.4 612.2L809.7 611.7L805.3 610.6L801.3 609L798 607.1L795.4 604.8L793.6 602.3Z" fill="none" stroke="#3a3a3a" stroke-width="1" stroke-opacity="0.55"/>
<g transform="translate(816 658)"><path d="M-20 .8H-10M-5 .2H-3M3 -.2H5M10 -.6H20M0 -16V-10M0 -6V-4M0 4V6M0 10V16" stroke="#222" stroke-width="1.300" opacity=".9"/><circle r="10.200" fill="none" stroke="#fff" stroke-width="1.600"/><circle r="10.200" fill="none" stroke="#f03a3a" stroke-width="1.600" stroke-dasharray="2.700 2.700"/><circle r="2.900" fill="#f5a33a" stroke="#333" stroke-width=".8"/></g>
</svg>
  </div>
  <div class="a" id="outliner" style="left:1588px;top:50px;width:332px;height:300px;background:#282828;border-radius:6px;overflow:hidden"></div>
  <div class="a" id="props" style="left:1588px;top:353px;width:332px;height:637px;background:#424242;border-radius:6px;overflow:hidden"></div>
  <div class="a" id="timeline" style="left:0;top:921px;width:1585px;height:69px;background:#2b2b2b;border-radius:6px;overflow:hidden"></div>
  <div class="a" id="status" style="left:0;top:990px;width:1920px;height:21px;background:#2b2b2b;border-bottom:1px solid #3c3c3c;border-radius:0 0 6px 6px"></div>
</div>
<!-- blender topbar (page coords) -->
<svg class="ic" style="left:5px;top:48px" width="25" height="20" viewBox="0 0 25 20"><circle cx="14.4" cy="11.5" r="4.3" fill="none" stroke="#e6e6e6" stroke-width="2.3"/><circle cx="14.4" cy="11.5" r="1.6" fill="#e6e6e6"/><path d="M6.3 6.9H15.5M12.9 3.6L17.8 7.6M5.8 12.9L10.2 8.8" stroke="#e6e6e6" stroke-width="2.1" stroke-linecap="round"/></svg>
<div class="tb" style="left:35px">File</div>
<div class="tb" style="left:68px">Edit</div>
<div class="tb" style="left:102px">Render</div>
<div class="tb" style="left:152px">Window</div>
<div class="tb" style="left:207px">Help</div>
<div class="tab" style="left:255px;width:52px;background:#424242;color:#fff">Layout</div>
<div class="tab" style="left:309px;width:63px">Modeling</div>
<div class="tab" style="left:374px;width:63px">Sculpting</div>
<div class="tab" style="left:440px;width:67px">UV Editing</div>
<div class="tab" style="left:510px;width:84px">Texture Paint</div>
<div class="tab" style="left:597px;width:57px">Shading</div>
<div class="tab" style="left:656px;width:68px">Animation</div>
<div class="tab" style="left:727px;width:67px">Rendering</div>
<div class="tab" style="left:797px;width:79px">Compositing</div>
<div class="tab" style="left:879px;width:101px">Geometry Nodes</div>
<div class="tab" style="left:983px;width:61px">Scripting</div>
<div class="tab" style="left:1047px;width:18px;font-size:17px;line-height:19px">+</div>
<!-- scene selector -->
<div class="bt" style="left:1523px;top:48px;width:191px;height:19px;background:#2b2b2b"></div>
<div class="a" style="left:1555px;top:48px;width:120px;height:19px;background:#1e1e1e"></div>
<div class="a" style="left:1675px;top:48px;width:20px;height:19px;background:#545454"></div><div class="a" style="left:1695px;top:48px;width:19px;height:19px;background:#3a3a3a;border-radius:0 4px 4px 0"></div>
<svg class="ic" style="left:1529px;top:50px" width="16" height="16" viewBox="0 0 16 16"><path d="M4.5 2L1.5 8.5a3 3 0 0 0 6 0z" fill="#ddd"/><circle cx="12" cy="4" r="2" fill="#ddd"/><circle cx="9.5" cy="11" r="3.2" fill="#2b2b2b" stroke="#ddd" stroke-width="1.2"/></svg>
<svg class="ic" style="left:1546px;top:55px" width="8" height="6" viewBox="0 0 8 6"><path d="M1 1.5l3 3 3-3" fill="none" stroke="#ddd" stroke-width="1.2"/></svg>
<div class="t" style="left:1562px;top:53px;font-size:11.3px;color:#e6e6e6">Scene</div>
<svg class="ic" style="left:1677px;top:50px" width="16" height="16" viewBox="0 0 16 16"><path d="M6 2h5l3 3v6H6z" fill="none" stroke="#e6e6e6" stroke-width="1.1"/><path d="M11 2v3h3z" fill="#e6e6e6"/><path d="M4 5.5v8h8" fill="none" stroke="#e6e6e6" stroke-width="1.1"/></svg>
<svg class="ic" style="left:1699px;top:53px" width="10" height="10" viewBox="0 0 10 10"><path d="M1 1l8 8M9 1l-8 8" stroke="#777" stroke-width="1.2"/></svg>
<div class="bt" style="left:1720px;top:48px;width:191px;height:19px;background:#2b2b2b"></div>
<div class="a" style="left:1751px;top:48px;width:120px;height:19px;background:#1e1e1e"></div>
<div class="a" style="left:1871px;top:48px;width:20px;height:19px;background:#545454"></div><div class="a" style="left:1891px;top:48px;width:20px;height:19px;background:#3a3a3a;border-radius:0 4px 4px 0"></div>
<svg class="ic" style="left:1725px;top:50px" width="16" height="16" viewBox="0 0 16 16"><path d="M6.5 1.5h8v8h-8z" fill="none" stroke="#e6e6e6" stroke-width="1"/><path d="M4.5 3.5v8h8M2.5 5.5v8h8" fill="none" stroke="#e6e6e6" stroke-width="1"/><path d="M7.5 8.5l2.2-3.5 1.300 1.700.8-.8 1.700 2.600z" fill="#e6e6e6"/><circle cx="12.300" cy="3.700" r=".9" fill="#e6e6e6"/></svg>
<svg class="ic" style="left:1742px;top:55px" width="8" height="6" viewBox="0 0 8 6"><path d="M1 1.5l3 3 3-3" fill="none" stroke="#ddd" stroke-width="1.2"/></svg>
<div class="t" style="left:1759px;top:53px;font-size:11.3px;color:#e6e6e6">View Layer</div>
<svg class="ic" style="left:1873px;top:50px" width="16" height="16" viewBox="0 0 16 16"><path d="M6 2h5l3 3v6H6z" fill="none" stroke="#e6e6e6" stroke-width="1.1"/><path d="M11 2v3h3z" fill="#e6e6e6"/><path d="M4 5.5v8h8" fill="none" stroke="#e6e6e6" stroke-width="1.1"/></svg>
<svg class="ic" style="left:1895px;top:53px" width="10" height="10" viewBox="0 0 10 10"><path d="M1 1l8 8M9 1l-8 8" stroke="#777" stroke-width="1.2"/></svg>
<!-- viewport tool header row -->
<div class="a" style="left:0;top:72px;width:1585px;height:25px;background:#3d3d3d;border-radius:6px 6px 0 0"></div>
<div class="bt" style="left:9px;top:76px;width:30px;height:18px"></div>
<svg class="ic" style="left:12px;top:76px" width="18" height="18" viewBox="0 0 18 18"><circle cx="11" cy="5" r="3" fill="#ddd"/><path d="M1.500 10.500h12M1.500 14.500h12M4 8l-1.500 9M11 8.500l1.500 8.500" stroke="#ddd" stroke-width="1.100" fill="none"/></svg>
<svg class="ic" style="left:30px;top:83px" width="8" height="6" viewBox="0 0 8 6"><path d="M1 1.500l3 3 3-3" fill="none" stroke="#ddd" stroke-width="1.200"/></svg>
<div class="a" style="left:52px;top:74px;width:22px;height:22px;background:#3d3d3d"></div>
<svg class="ic" style="left:52px;top:74px" width="22" height="22" viewBox="0 0 22 22"><rect x="1" y="1" width="20" height="20" fill="none" stroke="#f5a623" stroke-width="1.500" stroke-dasharray="3.500 2.200"/><path d="M8 6v10l2.600-2.500 4.400.5z" fill="#ddd"/></svg>
<div class="bt" style="left:89px;top:76px;width:94px;height:18px;background:#4a4a4a"></div>
<div class="a" style="left:108px;top:76px;width:19px;height:18px;background:#4772b3"></div>
<div class="a" style="left:127px;top:76px;width:1px;height:18px;background:#3a3a3a"></div>
<div class="a" style="left:146px;top:76px;width:1px;height:18px;background:#3a3a3a"></div>
<div class="a" style="left:165px;top:76px;width:1px;height:18px;background:#3a3a3a"></div>
<svg class="ic" style="left:89px;top:76px" width="94" height="18" viewBox="0 0 94 18"><rect x="3.500" y="2.500" width="12" height="12" fill="none" stroke="#ddd" stroke-dasharray="2 1.500"/><path d="M22 15V8h6V3h10v12z" fill="#fff"/><path d="M41 6h6v6h-6z" fill="none" stroke="#ccc" stroke-dasharray="2 1.500"/><path d="M45 3h10v10h-6V7h-4z" fill="#ccc"/><path d="M60 6h6v7h7V3h-7v3" fill="#ccc"/><path d="M61 7h5v5h-5zM66 4h6v5h-6z" fill="none" stroke="#ccc"/><rect x="79.500" y="2.500" width="12" height="12" fill="none" stroke="#ccc" stroke-dasharray="2 1.500"/><rect x="82.500" y="5.500" width="6" height="6" fill="#ccc"/></svg>
<!-- transform orientation etc -->
<div class="bt" style="left:668px;top:76px;width:78px;height:18px;background:#282828"></div>
<svg class="ic" style="left:672px;top:77px" width="16" height="16" viewBox="0 0 16 16"><path d="M2.500 1.500v12.500h12M2.500 13.500L12 4" fill="none" stroke="#ddd" stroke-width="1.100"/><path d="M.5 4l2-3 2 3M12 12l3 2-3 2M8.500 3.500l4-.5-.5 4" fill="none" stroke="#ddd" stroke-width="1"/><circle cx="2.500" cy="13.500" r="1.300" fill="#282828" stroke="#ddd"/></svg>
<div class="t" style="left:693px;top:81px;font-size:11.3px">Global</div>
<svg class="ic" style="left:736px;top:83px" width="8" height="6" viewBox="0 0 8 6"><path d="M1 1.500l3 3 3-3" fill="none" stroke="#ddd" stroke-width="1.200"/></svg>
<div class="bt" style="left:753px;top:76px;width:30px;height:18px;background:#282828"></div>
<svg class="ic" style="left:756px;top:77px" width="16" height="16" viewBox="0 0 16 16"><circle cx="10" cy="6" r="4.300" fill="none" stroke="#ddd" stroke-width="1.200"/><circle cx="6" cy="10" r="4.300" fill="none" stroke="#ddd" stroke-width="1.200"/><circle cx="8" cy="8" r="1.300" fill="#ddd"/></svg>
<svg class="ic" style="left:773px;top:83px" width="8" height="6" viewBox="0 0 8 6"><path d="M1 1.500l3 3 3-3" fill="none" stroke="#ddd" stroke-width="1.200"/></svg>
<div class="bt" style="left:790px;top:76px;width:50px;height:18px;background:#282828"></div>
<div class="a" style="left:790px;top:76px;width:18px;height:18px;background:#545454;border-radius:4px 0 0 4px"></div>
<svg class="ic" style="left:791px;top:77px" width="16" height="16" viewBox="0 0 16 16"><path d="M4 12L3 8a5 5 0 0 1 10 0l-1.500 4.500-1.500-.5 1.500-4a3 3 0 0 0-6 0l1 4z" fill="none" stroke="#999" stroke-width="1"/></svg>
<svg class="ic" style="left:809px;top:77px" width="16" height="16" viewBox="0 0 16 16"><path d="M1 11h14M2 9v5M6 9v5M10 9v5M14 9v5" stroke="#ddd" stroke-width="1.200"/><rect x="10.500" y="1.500" width="3.500" height="3.500" fill="#ddd"/></svg>
<svg class="ic" style="left:830px;top:83px" width="8" height="6" viewBox="0 0 8 6"><path d="M1 1.500l3 3 3-3" fill="none" stroke="#ddd" stroke-width="1.200"/></svg>
<div class="bt" style="left:847px;top:76px;width:50px;height:18px;background:#282828"></div>
<div class="a" style="left:847px;top:76px;width:18px;height:18px;background:#545454;border-radius:4px 0 0 4px"></div>
<svg class="ic" style="left:848px;top:77px" width="16" height="16" viewBox="0 0 16 16"><circle cx="8" cy="8" r="6.500" fill="none" stroke="#8a8a8a" stroke-width="1"/><circle cx="8" cy="8" r="2" fill="#bbb"/></svg>
<svg class="ic" style="left:868px;top:77px" width="16" height="16" viewBox="0 0 16 16"><path d="M1 14C4 14 5 2 8 2s4 12 7 12" fill="none" stroke="#aaa" stroke-width="1.100"/></svg>
<svg class="ic" style="left:887px;top:83px" width="8" height="6" viewBox="0 0 8 6"><path d="M1 1.500l3 3 3-3" fill="none" stroke="#666" stroke-width="1.200"/></svg>
<div class="bt" style="left:1517px;top:76px;width:61px;height:18px;background:#282828"></div>
<div class="t" style="left:1524px;top:81px;font-size:11.3px">Options</div>
<svg class="ic" style="left:1568px;top:83px" width="8" height="6" viewBox="0 0 8 6"><path d="M1 1.500l3 3 3-3" fill="none" stroke="#ddd" stroke-width="1.200"/></svg>

<!-- viewport header row 2 -->
<div class="bt" style="left:10px;top:101px;width:108px;height:18px;background:rgba(40,40,40,.92)"></div>
<svg class="ic" style="left:13px;top:102px" width="16" height="16" viewBox="0 0 16 16"><path d="M1.500 5V1.500H5M11 1.500h3.500V5M14.500 11v3.500H11M5 14.500H1.500V11" fill="none" stroke="#ddd" stroke-width="1"/><rect x="4" y="4" width="8" height="8" fill="#ddd"/></svg>
<div class="t" style="left:35px;top:105px;font-size:11.3px">Object Mode</div>
<svg class="ic" style="left:107px;top:107px" width="8" height="6" viewBox="0 0 8 6"><path d="M1 1.500l3 3 3-3" fill="none" stroke="#ddd" stroke-width="1.200"/></svg>
<div class="bt" style="left:125px;top:101px;width:37px;height:18px;background:rgba(40,40,40,.92)"></div>
<div class="t" style="left:132px;top:105px;font-size:11.3px">View</div>
<div class="bt" style="left:165px;top:101px;width:43px;height:18px;background:rgba(40,40,40,.92)"></div>
<div class="t" style="left:171px;top:105px;font-size:11.3px">Select</div>
<div class="bt" style="left:211px;top:101px;width:31px;height:18px;background:rgba(40,40,40,.92)"></div>
<div class="t" style="left:217px;top:105px;font-size:11.3px">Add</div>
<div class="bt" style="left:245px;top:101px;width:45px;height:18px;background:rgba(40,40,40,.92)"></div>
<div class="t" style="left:251px;top:105px;font-size:11.3px">Object</div>
<!-- header right -->
<div class="bt" style="left:1331px;top:101px;width:30px;height:18px;background:rgba(40,40,40,.92)"></div>
<svg class="ic" style="left:1331px;top:101px" width="20" height="18" viewBox="0 0 20 18"><path d="M7 5.500C9 2 14 2 16 5.500 14 9 9 9 7 5.500z" fill="none" stroke="#ddd" stroke-width="1.200"/><circle cx="11.500" cy="5.500" r="1.600" fill="#ddd"/><path d="M2 8l8 3.500-3.500 1.500-2 4z" fill="#ddd"/></svg>
<svg class="ic" style="left:1351px;top:107px" width="8" height="6" viewBox="0 0 8 6"><path d="M1 1.500l3 3 3-3" fill="none" stroke="#ddd" stroke-width="1.200"/></svg>
<div class="bt" style="left:1368px;top:101px;width:38px;height:18px;background:rgba(40,40,40,.92)"></div>
<div class="a" style="left:1368px;top:101px;width:18px;height:18px;background:#4772b3;border-radius:4px 0 0 4px"></div>
<svg class="ic" style="left:1369px;top:102px" width="16" height="16" viewBox="0 0 16 16"><path d="M1.500 4a10 10 0 0 1 11 9" fill="none" stroke="#eee" stroke-width="1.100"/><path d="M4.500 11.500L13 3M9.500 2.500h4v4" fill="none" stroke="#eee" stroke-width="1.100"/><circle cx="3.500" cy="12.500" r="1.800" fill="#4772b3" stroke="#eee" stroke-width="1.100"/></svg>
<svg class="ic" style="left:1392px;top:107px" width="8" height="6" viewBox="0 0 8 6"><path d="M1 1.500l3 3 3-3" fill="none" stroke="#ddd" stroke-width="1.200"/></svg>
<div class="bt" style="left:1413px;top:101px;width:38px;height:18px;background:rgba(40,40,40,.92)"></div>
<div class="a" style="left:1413px;top:101px;width:18px;height:18px;background:#4772b3;border-radius:4px 0 0 4px"></div>
<svg class="ic" style="left:1414px;top:102px" width="16" height="16" viewBox="0 0 16 16"><circle cx="6.500" cy="10" r="4.500" fill="none" stroke="#eee" stroke-width="1.100"/><circle cx="10" cy="6" r="4.500" fill="#eee"/><path d="M8 8.500l3-3" stroke="#4772b3" stroke-width="1"/></svg>
<svg class="ic" style="left:1437px;top:107px" width="8" height="6" viewBox="0 0 8 6"><path d="M1 1.500l3 3 3-3" fill="none" stroke="#ddd" stroke-width="1.200"/></svg>
<div class="bt" style="left:1458px;top:101px;width:18px;height:18px;background:#4f4f4f"></div>
<svg class="ic" style="left:1459px;top:102px" width="16" height="16" viewBox="0 0 16 16"><path d="M5 4.500V2h9v9h-2.500" fill="none" stroke="#ccc" stroke-width="1"/><rect x="2" y="5" width="9" height="9" fill="none" stroke="#ccc" stroke-width="1"/><path d="M5 8v2.500h2" stroke="#ccc" stroke-width="1" fill="none"/></svg>
<div class="bt" style="left:1483px;top:101px;width:95px;height:18px;background:#4f4f4f"></div>
<div class="a" style="left:1502px;top:101px;width:18px;height:18px;background:#4772b3"></div>
<div class="a" style="left:1559px;top:101px;width:19px;height:18px;background:#282828;border-radius:0 4px 4px 0"></div>
<div class="a" style="left:1501px;top:101px;width:1px;height:18px;background:#3a3a3a"></div>
<div class="a" style="left:1539px;top:101px;width:1px;height:18px;background:#3a3a3a"></div>
<svg class="ic" style="left:1483px;top:101px" width="95" height="18" viewBox="0 0 95 18"><circle cx="9" cy="9" r="6.500" fill="none" stroke="#ccc" stroke-width="1"/><path d="M2.500 7h13M2.500 11h13M9 2.500c-3 4-3 9 0 13M9 2.500c3 4 3 9 0 13" fill="none" stroke="#ccc" stroke-width=".9"/><circle cx="28" cy="9" r="7" fill="#fff"/><circle cx="47" cy="9" r="6.500" fill="none" stroke="#ccc" stroke-width="1"/><path d="M47 2.500v6.500l4.600 4.600A6.500 6.500 0 0 1 41 13z" fill="#ccc"/><circle cx="66" cy="9" r="6.500" fill="none" stroke="#ccc" stroke-width="1"/><path d="M62 6a4 4 0 0 1 3-2.500" fill="none" stroke="#ccc" stroke-width="1.200"/></svg>
<svg class="ic" style="left:1564px;top:107px" width="8" height="6" viewBox="0 0 8 6"><path d="M1 1.500l3 3 3-3" fill="none" stroke="#ddd" stroke-width="1.200"/></svg>

<!-- overlay text -->
<div class="t" style="left:67px;top:134px;font-size:11.3px;color:#eee;text-shadow:0 0 2px #000">User Perspective</div>
<div class="t" style="left:67px;top:152px;font-size:11.3px;color:#eee;text-shadow:0 0 2px #000">(1) Collection | base01</div>

<!-- left toolbar -->
<div class="a" style="left:9px;top:132px;width:40px;height:68px;background:#2b2b2b;border-radius:5px"></div>
<div class="a" style="left:9px;top:132px;width:40px;height:33px;background:#4772b3;border-radius:5px 5px 0 0"></div>
<div class="a" style="left:9px;top:207px;width:40px;height:138px;background:#2b2b2b;border-radius:5px"></div>
<div class="a" style="left:9px;top:352px;width:40px;height:69px;background:#2b2b2b;border-radius:5px"></div>
<div class="a" style="left:9px;top:427px;width:40px;height:35px;background:#2b2b2b;border-radius:5px"></div>
<div class="a" style="left:9px;top:240px;width:40px;height:1px;background:#262626"></div>
<div class="a" style="left:9px;top:275px;width:40px;height:1px;background:#262626"></div>
<div class="a" style="left:9px;top:310px;width:40px;height:1px;background:#262626"></div>
<div class="a" style="left:9px;top:385px;width:40px;height:1px;background:#262626"></div>
<svg class="ic" style="left:9px;top:132px" width="40" height="330" viewBox="0 0 40 330">
 <rect x="8.500" y="6.500" width="22" height="22" fill="none" stroke="#f5a623" stroke-width="1.300" stroke-dasharray="3.200 2"/>
 <path d="M16 11v11l3-2.800 4.500.3z" fill="#ddd"/>
 <path d="M37 28l-3 3h3z" fill="#bbb"/>
 <circle cx="19.500" cy="50" r="11" fill="none" stroke="#eee" stroke-width="1.500" stroke-dasharray="4 3"/>
 <circle cx="19.500" cy="50" r="11" fill="none" stroke="#a33" stroke-width="1.500" stroke-dasharray="3 4" stroke-dashoffset="3.500"/>
 <path d="M19.500 44v4M19.500 52v4M13.500 50h4M21.500 50h4" stroke="#999" stroke-width="1.300"/>
 <path d="M19.500 80v22M8.500 91h22" stroke="#ddd" stroke-width="1.200" stroke-dasharray="3 2"/>
 <path d="M19.500 78l-3 4h6zM19.500 104l-3-4h6zM6.500 91l4-3v6zM32.500 91l-4-3v6z" fill="#ddd"/>
 <path d="M11 119a9.500 9.500 0 0 1 17 0M28 127a9.500 9.500 0 0 1-17 0" fill="none" stroke="#ddd" stroke-width="1.100"/>
 <path d="M19.500 119l3.500 3.500-3.500 3.500-3.500-3.500z" fill="#aaa"/><path d="M8 121h6l-3 4zM25 124h6l-3-4z" fill="#ddd"/>
 <rect x="12" y="154" width="8" height="8" fill="#ddd"/><path d="M20 146h7v10M22 151l5-5M24 146h3v3" fill="none" stroke="#ddd" stroke-width="1.200"/>
 <path d="M37 168l-3 3h3z" fill="#bbb"/>
 <circle cx="19.500" cy="196" r="10" fill="none" stroke="#ddd" stroke-width="1" stroke-dasharray="3 2"/>
 <rect x="15" y="191.500" width="9" height="9" fill="#ddd"/><path d="M19.500 184l-2.500 3h5zM19.500 208l-2.500-3h5zM7.500 196l3-2.500v5zM31.500 196l-3-2.500v5z" fill="#ddd"/>
 <path d="M7.5 243l1.200-4.300 11.800-11.800 3.100 3.100-11.800 11.800z" fill="#ddd"/>
 <path d="M8 246.500C12 242.500 15.500 239 18.500 239.500 22 240 26 245 32 244" fill="none" stroke="#6fcf97" stroke-width="1.300"/>
 <path d="M37 240l-3 3h3z" fill="#bbb"/>
 <rect x="10" y="259" width="4" height="24" fill="#ddd"/><rect x="10" y="279" width="21" height="4" fill="#ddd"/>
 <path d="M14 279V266.500A12.500 12.500 0 0 1 26.500 279z" fill="#6fcf97"/><path d="M14 262.500A16.500 16.500 0 0 1 30.500 279" fill="none" stroke="#ddd" stroke-width="1"/>
 <path d="M6.400 303.600h7.700M10.250 299.700v7.700" stroke="#6fcf97" stroke-width="2.200"/>
 <path d="M11.600 308.200h14.500v14.500H11.600zM11.600 308.200l5.200-4.300h14.500l-5.200 4.300M26.100 322.700l5.200-4.300V303.900" fill="none" stroke="#6fcf97" stroke-width="1.200"/>
 <path d="M37 323l-3 3h3z" fill="#bbb"/>
</svg>

<!-- gizmo -->
<svg class="ic" style="left:1490px;top:130px" width="90" height="85" viewBox="1490 130 90 85">
 <circle cx="1535.200" cy="200.600" r="7.300" fill="#3d4b5e" stroke="#3b7bd0" stroke-width="1.300"/>
 <circle cx="1537.600" cy="189" r="7.600" fill="#5a722e" stroke="#9fd32b" stroke-width="1.400"/>
 <circle cx="1503" cy="174.200" r="7.400" fill="#6b3440" stroke="#d6344f" stroke-width="1.300"/>
 <circle cx="1532" cy="156.500" r="7.500" fill="#6a9430"/>
 <text x="1532" y="160.500" font-size="11" text-anchor="middle" fill="#2a3a18" font-family="Liberation Sans">Y</text>
 <path d="M1535.400 172.600L1533 160" stroke="#6a9430" stroke-width="2"/>
 <path d="M1535.400 172.600H1560" stroke="#d6344f" stroke-width="2"/>
 <path d="M1535.400 172.600V152" stroke="#3b8ff0" stroke-width="2"/>
 <circle cx="1567" cy="171.500" r="8" fill="#d6344f"/>
 <text x="1567" y="175.500" font-size="11" text-anchor="middle" fill="#3a0f18" font-family="Liberation Sans">X</text>
 <circle cx="1535" cy="145.400" r="8" fill="#3b8ff0"/>
 <text x="1535" y="149.500" font-size="11" text-anchor="middle" fill="#0f2440" font-family="Liberation Sans">Z</text>
</svg>
<div class="a" style="left:1576px;top:135px;width:9px;height:18px;background:#333;border-radius:4px 0 0 4px"></div>
<svg class="ic" style="left:1577px;top:139px" width="7" height="10" viewBox="0 0 7 10"><path d="M5.500 1l-4 4 4 4" fill="none" stroke="#999" stroke-width="1"/></svg>
<!-- nav buttons -->
<div class="a" style="left:1549px;top:213px;width:28px;height:28px;border-radius:50%;background:rgba(40,40,40,.75)"></div>
<div class="a" style="left:1549px;top:243px;width:28px;height:28px;border-radius:50%;background:rgba(40,40,40,.75)"></div>
<div class="a" style="left:1549px;top:273px;width:28px;height:28px;border-radius:50%;background:rgba(40,40,40,.75)"></div>
<div class="a" style="left:1549px;top:304px;width:28px;height:28px;border-radius:50%;background:rgba(40,40,40,.75)"></div>
<svg class="ic" style="left:1549px;top:213px" width="28" height="120" viewBox="0 0 28 120">
 <circle cx="16" cy="12" r="5.500" fill="#ddd"/><path d="M16 9v6M13 12h6" stroke="#333" stroke-width="1.200"/><path d="M7 21l5-5" stroke="#ddd" stroke-width="2.200" stroke-linecap="round"/>
 <g transform="translate(0.5 4)"><path d="M9 42c0-3 0-8 1.500-8s1.500 4 1.500 5v-7c0-1.500 2.500-1.500 2.500 0v6-7c0-1.500 2.500-1.500 2.500 0v7-5c0-1.500 2.500-1.500 2.500 0v8c0 4-2 7-6 7-3 0-4-2-6-5l-2-3c-1-1.500 1-2.500 2-1.500z" fill="#ddd"/></g>
 <circle cx="11" cy="68" r="3.500" fill="#ddd"/><circle cx="17.500" cy="68" r="3.500" fill="#ddd"/><rect x="8" y="71" width="12" height="6" fill="#ddd"/><path d="M20 74l4-2.500v6z M5 72h3v4H5z" fill="#ddd"/><circle cx="11" cy="68" r="1" fill="#333"/><circle cx="17.500" cy="68" r="1" fill="#333"/>
 <path d="M8 108l2-11h8l2 11z" fill="none" stroke="#ddd" stroke-width="1.300"/><path d="M7 103h14M9 100h10M12 97l-1 11M16 97l1 11" stroke="#ddd" stroke-width="1.100"/>
</svg>
<!-- outliner -->
<div class="a" style="left:1588px;top:72px;width:332px;height:300px;background:#282828;border-radius:6px;overflow:hidden">
 <div class="a" style="left:0;top:0;width:332px;height:25px;background:#3a3a3a"></div>
 <div class="a" style="left:0;top:46px;width:332px;height:20px;background:#2b2b2b"></div>
 <div class="a" style="left:0;top:86px;width:332px;height:20px;background:#2b2b2b"></div>
 <div class="a" style="left:0;top:126px;width:332px;height:20px;background:#2b2b2b"></div>
 <div class="a" style="left:0;top:166px;width:332px;height:20px;background:#2b2b2b"></div>
 <div class="a" style="left:0;top:206px;width:332px;height:20px;background:#2b2b2b"></div>
 <div class="a" style="left:0;top:246px;width:332px;height:20px;background:#2b2b2b"></div>
 <div class="a" style="left:0;top:286px;width:332px;height:20px;background:#2b2b2b"></div>
</div>
<div class="bt" style="left:1597px;top:75px;width:30px;height:18px;background:#2c2c2c"></div>
<svg class="ic" style="left:1600px;top:76px" width="16" height="16" viewBox="0 0 16 16"><rect x="1.500" y="1" width="4" height="2.500" fill="#ddd"/><path d="M2.500 3.500v9h3M2.500 8h3" fill="none" stroke="#ddd" stroke-width="1"/><rect x="6" y="6.500" width="7" height="3" fill="#ddd"/><rect x="6" y="11" width="7" height="3" fill="#ddd"/></svg>
<svg class="ic" style="left:1617px;top:81px" width="8" height="6" viewBox="0 0 8 6"><path d="M1 1.500l3 3 3-3" fill="none" stroke="#ddd" stroke-width="1.200"/></svg>
<div class="bt" style="left:1634px;top:75px;width:30px;height:18px;background:#2c2c2c"></div>
<svg class="ic" style="left:1637px;top:76px" width="16" height="16" viewBox="0 0 16 16"><path d="M6.5 1.5h8v8h-8z" fill="none" stroke="#e6e6e6" stroke-width="1"/><path d="M4.5 3.5v8h8M2.5 5.5v8h8" fill="none" stroke="#e6e6e6" stroke-width="1"/><path d="M7.5 8.5l2.2-3.5 1.300 1.700.8-.8 1.700 2.600z" fill="#e6e6e6"/><circle cx="12.300" cy="3.700" r=".9" fill="#e6e6e6"/></svg>
<svg class="ic" style="left:1654px;top:81px" width="8" height="6" viewBox="0 0 8 6"><path d="M1 1.500l3 3 3-3" fill="none" stroke="#ddd" stroke-width="1.200"/></svg>
<div class="bt" style="left:1688px;top:75px;width:109px;height:18px;background:#1e1e1e"></div>
<svg class="ic" style="left:1692px;top:76px" width="16" height="16" viewBox="0 0 16 16"><circle cx="9.500" cy="6" r="4.200" fill="none" stroke="#ddd" stroke-width="1.200"/><path d="M6.500 9l-4.500 4.500" stroke="#ddd" stroke-width="1.200"/></svg>
<div class="bt" style="left:1856px;top:75px;width:30px;height:18px;background:#2c2c2c"></div>
<svg class="ic" style="left:1857px;top:76px" width="16" height="16" viewBox="0 0 16 16"><path d="M1.500 2.500h13l-5.500 6-2.500 6.500V8.500z" fill="none" stroke="#ddd" stroke-width="1.100"/></svg>
<svg class="ic" style="left:1876px;top:81px" width="8" height="6" viewBox="0 0 8 6"><path d="M1 1.500l3 3 3-3" fill="none" stroke="#ddd" stroke-width="1.200"/></svg>
<div class="bt" style="left:1893px;top:75px;width:18px;height:18px;background:#505050"></div>
<svg class="ic" style="left:1894px;top:76px" width="16" height="16" viewBox="0 0 16 16"><path d="M2 3.500h6v3H2zM3 6.500v8h9V9" fill="none" stroke="#ccc" stroke-width="1"/><path d="M6 10h3" stroke="#ccc" stroke-width="1.200"/><circle cx="12" cy="4" r="3.300" fill="#eee"/><path d="M12 2v4M10 4h4" stroke="#505050" stroke-width="1.100"/></svg>
<!-- rows -->
<svg class="ic" style="left:1611px;top:101px" width="15" height="15" viewBox="0 0 15 15"><rect x="0.500" y="1" width="14" height="3.500" fill="#ddd"/><rect x="1.500" y="5.500" width="12" height="8.500" fill="#ddd"/><rect x="5.500" y="7.500" width="4" height="1.500" fill="#282828"/></svg>
<div class="t" style="left:1632px;top:105px;font-size:11.3px;color:#e6e6e6">Scene Collection</div>
<svg class="ic" style="left:1614px;top:125px" width="8" height="7" viewBox="0 0 8 7"><path d="M.5 .5h7L4 6.500z" fill="#ccc"/></svg>
<div class="a" style="left:1628px;top:119px;width:20px;height:18px;background:#464646;border-radius:4px;box-shadow:inset 0 0 0 1px #555"></div>
<svg class="ic" style="left:1631px;top:121px" width="15" height="15" viewBox="0 0 15 15"><rect x="0.500" y="1" width="14" height="3.500" fill="#ddd"/><rect x="1.500" y="5.500" width="12" height="8.500" fill="#ddd"/><rect x="5.500" y="7.500" width="4" height="1.500" fill="#464646"/></svg>
<div class="t" style="left:1652px;top:125px;font-size:11.3px;color:#e6e6e6">Collection</div>
<svg class="ic" style="left:1854px;top:121px" width="60" height="16" viewBox="0 0 60 16"><rect x="2.500" y="2" width="11" height="11" fill="#ddd" rx="1"/><path d="M5 7.500l2.500 2.500 4-5" fill="none" stroke="#222" stroke-width="1.800"/></svg>
<div class="a" style="left:1617px;top:142px;width:1px;height:72px;background:#555"></div>
<svg class="ic" style="left:1635px;top:144px" width="7" height="8" viewBox="0 0 7 8"><path d="M.5 .5v7l6-3.500z" fill="#ccc"/></svg>
<div class="a" style="left:1648px;top:139px;width:20px;height:18px;background:#464646;border-radius:4px;box-shadow:inset 0 0 0 1px #555"></div>
<svg class="ic" style="left:1651px;top:141px" width="14" height="14" viewBox="0 0 14 14"><path d="M1 1.500h12L7 13z" fill="none" stroke="#e0904a" stroke-width="2.300" stroke-linejoin="round"/></svg>
<div class="t" style="left:1672px;top:145px;font-size:11.3px;color:#e6e6e6">base01</div>
<svg class="ic" style="left:1732px;top:141px" width="14" height="14" viewBox="0 0 14 14"><path d="M2 3h10L7 12z" fill="none" stroke="#1fbf99" stroke-width="1.100"/><rect x=".500" y="1.500" width="3" height="3" fill="#282828" stroke="#1fbf99" stroke-width="1"/><rect x="10.500" y="1.500" width="3" height="3" fill="#282828" stroke="#1fbf99" stroke-width="1"/><rect x="5.500" y="10.500" width="3" height="3" fill="#282828" stroke="#1fbf99" stroke-width="1"/></svg>
<svg class="ic" style="left:1876px;top:142px" width="14" height="13" viewBox="0 0 14 13"><path d="M1 6.500C4 1.500 10 1.500 13 6.500 10 11.500 4 11.500 1 6.500z" fill="#ddd"/><path d="M3 6.500C5 3.300 9 3.300 11 6.500 9 9.700 5 9.700 3 6.500z" fill="#282828"/><circle cx="7" cy="6.500" r="1.500" fill="#ddd"/></svg>
<svg class="ic" style="left:1894px;top:142px" width="15" height="13" viewBox="0 0 15 13"><path d="M1 3h3l1-2h5l1 2h3v9H1z" fill="#ddd"/><circle cx="7.500" cy="7.500" r="3.500" fill="#282828"/><circle cx="7.500" cy="7.500" r="2.500" fill="#ddd"/><circle cx="7.500" cy="7.500" r="1.400" fill="#282828"/></svg>
<svg class="ic" style="left:1635px;top:164px" width="7" height="8" viewBox="0 0 7 8"><path d="M.5 .5v7l6-3.500z" fill="#ccc"/></svg>
<svg class="ic" style="left:1651px;top:161px" width="14" height="14" viewBox="0 0 14 14"><path d="M1 1.500h12L7 13z" fill="none" stroke="#e0904a" stroke-width="2.300" stroke-linejoin="round"/></svg>
<div class="t" style="left:1672px;top:165px;font-size:11.3px;color:#e6e6e6">base02</div>
<svg class="ic" style="left:1732px;top:161px" width="14" height="14" viewBox="0 0 14 14"><path d="M2 3h10L7 12z" fill="none" stroke="#1fbf99" stroke-width="1.100"/><rect x=".500" y="1.500" width="3" height="3" fill="#282828" stroke="#1fbf99" stroke-width="1"/><rect x="10.500" y="1.500" width="3" height="3" fill="#282828" stroke="#1fbf99" stroke-width="1"/><rect x="5.500" y="10.500" width="3" height="3" fill="#282828" stroke="#1fbf99" stroke-width="1"/></svg>
<svg class="ic" style="left:1876px;top:162px" width="14" height="13" viewBox="0 0 14 13"><path d="M1 6.500C4 1.500 10 1.500 13 6.500 10 11.500 4 11.500 1 6.500z" fill="#ddd"/><path d="M3 6.500C5 3.300 9 3.300 11 6.500 9 9.700 5 9.700 3 6.500z" fill="#282828"/><circle cx="7" cy="6.500" r="1.500" fill="#ddd"/></svg>
<svg class="ic" style="left:1894px;top:162px" width="15" height="13" viewBox="0 0 15 13"><path d="M1 3h3l1-2h5l1 2h3v9H1z" fill="#ddd"/><circle cx="7.500" cy="7.500" r="3.500" fill="#282828"/><circle cx="7.500" cy="7.500" r="2.500" fill="#ddd"/><circle cx="7.500" cy="7.500" r="1.400" fill="#282828"/></svg>
<svg class="ic" style="left:1635px;top:184px" width="7" height="8" viewBox="0 0 7 8"><path d="M.5 .5v7l6-3.500z" fill="#ccc"/></svg>
<svg class="ic" style="left:1651px;top:181px" width="14" height="14" viewBox="0 0 14 14"><path d="M1 1.500h12L7 13z" fill="none" stroke="#e0904a" stroke-width="2.300" stroke-linejoin="round"/></svg>
<div class="t" style="left:1672px;top:185px;font-size:11.3px;color:#e6e6e6">base03</div>
<svg class="ic" style="left:1732px;top:181px" width="14" height="14" viewBox="0 0 14 14"><path d="M2 3h10L7 12z" fill="none" stroke="#1fbf99" stroke-width="1.100"/><rect x=".500" y="1.500" width="3" height="3" fill="#282828" stroke="#1fbf99" stroke-width="1"/><rect x="10.500" y="1.500" width="3" height="3" fill="#282828" stroke="#1fbf99" stroke-width="1"/><rect x="5.500" y="10.500" width="3" height="3" fill="#282828" stroke="#1fbf99" stroke-width="1"/></svg>
<svg class="ic" style="left:1876px;top:182px" width="14" height="13" viewBox="0 0 14 13"><path d="M1 6.500C4 1.500 10 1.500 13 6.500 10 11.500 4 11.500 1 6.500z" fill="#ddd"/><path d="M3 6.500C5 3.300 9 3.300 11 6.500 9 9.700 5 9.700 3 6.500z" fill="#282828"/><circle cx="7" cy="6.500" r="1.500" fill="#ddd"/></svg>
<svg class="ic" style="left:1894px;top:182px" width="15" height="13" viewBox="0 0 15 13"><path d="M1 3h3l1-2h5l1 2h3v9H1z" fill="#ddd"/><circle cx="7.500" cy="7.500" r="3.500" fill="#282828"/><circle cx="7.500" cy="7.500" r="2.500" fill="#ddd"/><circle cx="7.500" cy="7.500" r="1.400" fill="#282828"/></svg>
<svg class="ic" style="left:1635px;top:204px" width="7" height="8" viewBox="0 0 7 8"><path d="M.5 .5v7l6-3.500z" fill="#ccc"/></svg>
<svg class="ic" style="left:1651px;top:201px" width="14" height="14" viewBox="0 0 14 14"><path d="M1 1.500h12L7 13z" fill="none" stroke="#e0904a" stroke-width="2.300" stroke-linejoin="round"/></svg>
<div class="t" style="left:1672px;top:205px;font-size:11.3px;color:#e6e6e6">monolito</div>
<svg class="ic" style="left:1739px;top:201px" width="14" height="14" viewBox="0 0 14 14"><path d="M2 3h10L7 12z" fill="none" stroke="#1fbf99" stroke-width="1.100"/><rect x=".500" y="1.500" width="3" height="3" fill="#282828" stroke="#1fbf99" stroke-width="1"/><rect x="10.500" y="1.500" width="3" height="3" fill="#282828" stroke="#1fbf99" stroke-width="1"/><rect x="5.500" y="10.500" width="3" height="3" fill="#282828" stroke="#1fbf99" stroke-width="1"/></svg>
<svg class="ic" style="left:1876px;top:202px" width="14" height="13" viewBox="0 0 14 13"><path d="M1 6.500C4 1.500 10 1.500 13 6.500 10 11.500 4 11.500 1 6.500z" fill="#ddd"/><path d="M3 6.500C5 3.300 9 3.300 11 6.500 9 9.700 5 9.700 3 6.500z" fill="#282828"/><circle cx="7" cy="6.500" r="1.500" fill="#ddd"/></svg>
<svg class="ic" style="left:1894px;top:202px" width="15" height="13" viewBox="0 0 15 13"><path d="M1 3h3l1-2h5l1 2h3v9H1z" fill="#ddd"/><circle cx="7.500" cy="7.500" r="3.500" fill="#282828"/><circle cx="7.500" cy="7.500" r="2.500" fill="#ddd"/><circle cx="7.500" cy="7.500" r="1.400" fill="#282828"/></svg>
<svg class="ic" style="left:1876px;top:122px" width="14" height="13" viewBox="0 0 14 13"><path d="M1 6.500C4 1.500 10 1.500 13 6.500 10 11.500 4 11.500 1 6.500z" fill="#ddd"/><path d="M3 6.500C5 3.300 9 3.300 11 6.500 9 9.700 5 9.700 3 6.500z" fill="#282828"/><circle cx="7" cy="6.500" r="1.500" fill="#ddd"/></svg>
<svg class="ic" style="left:1894px;top:122px" width="15" height="13" viewBox="0 0 15 13"><path d="M1 3h3l1-2h5l1 2h3v9H1z" fill="#ddd"/><circle cx="7.500" cy="7.500" r="3.500" fill="#282828"/><circle cx="7.500" cy="7.500" r="2.500" fill="#ddd"/><circle cx="7.500" cy="7.500" r="1.400" fill="#282828"/></svg>
<!-- properties -->
<div class="a" style="left:1588px;top:375px;width:332px;height:637px;background:#424242;border-radius:6px;overflow:hidden">
 <div class="a" style="left:0;top:0;width:332px;height:25px;background:#3b3b3b"></div>
 <div class="a" style="left:0;top:25px;width:28px;height:612px;background:#232323"></div>
 <div class="a" style="left:28px;top:85px;width:304px;height:86px;background:#3b3b3b"></div>
</div>
<div class="bt" style="left:1597px;top:378px;width:30px;height:18px;background:#2c2c2c"></div>
<svg class="ic" style="left:1600px;top:379px" width="16" height="16" viewBox="0 0 16 16"><rect x="1" y="1.500" width="14" height="5.500" rx="2.700" fill="#ddd"/><rect x="1" y="9" width="14" height="5.500" rx="2.700" fill="#ddd"/><rect x="8" y="3" width="5" height="2.500" rx="1.200" fill="#2c2c2c"/><rect x="8" y="10.500" width="5" height="2.500" rx="1.200" fill="#2c2c2c"/></svg>
<svg class="ic" style="left:1617px;top:384px" width="8" height="6" viewBox="0 0 8 6"><path d="M1 1.500l3 3 3-3" fill="none" stroke="#ddd" stroke-width="1.200"/></svg>
<div class="bt" style="left:1700px;top:378px;width:109px;height:18px;background:#1d1d1d"></div>
<svg class="ic" style="left:1703px;top:379px" width="16" height="16" viewBox="0 0 16 16"><circle cx="9.500" cy="6" r="4.200" fill="none" stroke="#ddd" stroke-width="1.200"/><path d="M6.500 9l-4.500 4.500" stroke="#ddd" stroke-width="1.200"/></svg>
<div class="bt" style="left:1893px;top:378px;width:18px;height:18px;background:#2c2c2c"></div>
<svg class="ic" style="left:1898px;top:384px" width="8" height="6" viewBox="0 0 8 6"><path d="M1 1.500l3 3 3-3" fill="none" stroke="#ddd" stroke-width="1.200"/></svg>
<div class="a" style="left:1590px;top:408px;width:26px;height:27px;background:#2c2c2c;border-radius:5px 0 0 5px"></div>
<svg class="ic" style="left:1595px;top:413px" width="16" height="16" viewBox="0 0 16 16"><path d="M5 2v6" stroke="#ddd" stroke-width="1.200"/><ellipse cx="5" cy="11.500" rx="2" ry="2.500" fill="#ddd"/><path d="M11 14V7M8.500 2.500v2.500a2.500 2.500 0 0 0 5 0V2.500" fill="none" stroke="#ddd" stroke-width="1.800"/></svg>
<div class="a" style="left:1590px;top:444px;width:26px;height:27px;background:#2c2c2c;border-radius:5px 0 0 5px"></div>
<svg class="ic" style="left:1595px;top:449px" width="16" height="16" viewBox="0 0 16 16"><path d="M1.500 5h13v8h-13z" fill="none" stroke="#ddd" stroke-width="1.300"/><path d="M4 5V3h5v2M12 3h2" stroke="#ddd" stroke-width="1.300"/><path d="M3 7.500h7M3 9.500h7M3 11.500h7" stroke="#ddd" stroke-width=".8"/></svg>
<div class="a" style="left:1590px;top:472px;width:26px;height:27px;background:#2c2c2c;border-radius:5px 0 0 5px"></div>
<svg class="ic" style="left:1595px;top:477px" width="16" height="16" viewBox="0 0 16 16"><path d="M2 6h12v4H2z" fill="#ddd"/><path d="M3 2h10v4M4 10v5h8v-5" fill="none" stroke="#ddd" stroke-width="1.100"/><path d="M5 14l2-3 2 2 2-2" fill="#ddd"/></svg>
<div class="a" style="left:1590px;top:500px;width:26px;height:27px;background:#2c2c2c;border-radius:5px 0 0 5px"></div>
<svg class="ic" style="left:1595px;top:505px" width="16" height="16" viewBox="0 0 16 16"><path d="M6.5 1.5h8v8h-8z" fill="none" stroke="#e6e6e6" stroke-width="1"/><path d="M4.5 3.5v8h8M2.5 5.5v8h8" fill="none" stroke="#e6e6e6" stroke-width="1"/><path d="M7.5 8.5l2.2-3.5 1.300 1.700.8-.8 1.700 2.600z" fill="#e6e6e6"/><circle cx="12.300" cy="3.700" r=".9" fill="#e6e6e6"/></svg>
<div class="a" style="left:1590px;top:528px;width:26px;height:27px;background:#424242;border-radius:5px 0 0 5px"></div>
<svg class="ic" style="left:1595px;top:533px" width="16" height="16" viewBox="0 0 16 16"><path d="M4.500 3L1.500 10a3 3 0 0 0 6 0z" fill="#ddd"/><circle cx="12.500" cy="3.500" r="1.800" fill="#ddd"/><circle cx="10" cy="11" r="3.200" fill="#424242" stroke="#ddd" stroke-width="1.200"/></svg>
<div class="a" style="left:1590px;top:556px;width:26px;height:27px;background:#2c2c2c;border-radius:5px 0 0 5px"></div>
<svg class="ic" style="left:1595px;top:561px" width="16" height="16" viewBox="0 0 16 16"><circle cx="8" cy="8.500" r="6" fill="#c9606b"/><path d="M4 6.500c1.500-1 3 0 3.500 1.500s-1 3 .5 4.500M9.500 3.500c0 1.500 2 2 3.500 2.500" fill="none" stroke="#2c2c2c" stroke-width="1.300"/><path d="M1.500 14.500L14.500 1.500" stroke="#c9606b" stroke-width="1.100"/></svg>
<div class="a" style="left:1590px;top:593px;width:26px;height:27px;background:#2c2c2c;border-radius:5px 0 0 5px"></div>
<svg class="ic" style="left:1595px;top:598px" width="16" height="16" viewBox="0 0 16 16"><rect x="1.500" y="2" width="13" height="3" fill="none" stroke="#ddd" stroke-width="1.100"/><rect x="2.500" y="6" width="11" height="8" fill="none" stroke="#ddd" stroke-width="1.100"/><rect x="6" y="8" width="4" height="1.300" fill="#ddd"/></svg>
<div class="a" style="left:1590px;top:629px;width:26px;height:27px;background:#2c2c2c;border-radius:5px 0 0 5px"></div>
<svg class="ic" style="left:1595px;top:634px" width="16" height="16" viewBox="0 0 16 16"><rect x="4" y="4" width="8" height="8" fill="#e0904a"/><path d="M1.500 5V1.500H5M11 1.500h3.500V5M14.500 11v3.500H11M5 14.500H1.500V11" fill="none" stroke="#e0904a" stroke-width="1"/></svg>
<div class="a" style="left:1590px;top:657px;width:26px;height:27px;background:#2c2c2c;border-radius:5px 0 0 5px"></div>
<svg class="ic" style="left:1595px;top:662px" width="16" height="16" viewBox="0 0 16 16"><path d="M2.500 13.500l6-6a3.500 3.500 0 0 0 4.500-4.500l-2 2-2-.5-.5-2 2-2A3.500 3.500 0 0 0 6 5l-6 6z" fill="#5d9ce0"/></svg>
<div class="a" style="left:1590px;top:685px;width:26px;height:27px;background:#2c2c2c;border-radius:5px 0 0 5px"></div>
<svg class="ic" style="left:1595px;top:690px" width="16" height="16" viewBox="0 0 16 16"><circle cx="4" cy="4" r="2.300" fill="#6a9ee0"/><circle cx="13" cy="4" r="1.300" fill="#6a9ee0"/><circle cx="12" cy="12" r="1.600" fill="#6a9ee0"/><circle cx="4" cy="13" r="1.300" fill="#6a9ee0"/><path d="M4 4h9M4 4l8 8M4 4v9" stroke="#6a9ee0" stroke-width="1"/></svg>
<div class="a" style="left:1590px;top:713px;width:26px;height:27px;background:#2c2c2c;border-radius:5px 0 0 5px"></div>
<svg class="ic" style="left:1595px;top:718px" width="16" height="16" viewBox="0 0 16 16"><path d="M13 6a5.500 5.500 0 1 1-3-3.500" fill="none" stroke="#6a9ee0" stroke-width="1.200"/><circle cx="7" cy="9" r="2.300" fill="#6a9ee0"/><circle cx="12.500" cy="3.500" r="1.600" fill="#6a9ee0"/></svg>
<div class="a" style="left:1590px;top:741px;width:26px;height:27px;background:#2c2c2c;border-radius:5px 0 0 5px"></div>
<svg class="ic" style="left:1595px;top:746px" width="16" height="16" viewBox="0 0 16 16"><path d="M10.500 2.500a3 3 0 0 1 3 3.500L8 13.500a4 4 0 0 1-6-5z" fill="none" stroke="#6a9ee0" stroke-width="1.200"/><circle cx="6" cy="10" r="2.500" fill="none" stroke="#6a9ee0" stroke-width="1.200"/><circle cx="6" cy="10" r="1" fill="#6a9ee0"/></svg>
<div class="a" style="left:1590px;top:769px;width:26px;height:27px;background:#2c2c2c;border-radius:5px 0 0 5px"></div>
<svg class="ic" style="left:1595px;top:774px" width="16" height="16" viewBox="0 0 16 16"><path d="M2.500 3h11L8 13z" fill="none" stroke="#1fbf99" stroke-width="1.100"/><rect x="1" y="1.500" width="3" height="3" fill="#232323" stroke="#1fbf99"/><rect x="12" y="1.500" width="3" height="3" fill="#232323" stroke="#1fbf99"/><rect x="6.500" y="11.500" width="3" height="3" fill="#232323" stroke="#1fbf99"/></svg>
<div class="a" style="left:1590px;top:797px;width:26px;height:27px;background:#2c2c2c;border-radius:5px 0 0 5px"></div>
<svg class="ic" style="left:1595px;top:802px" width="16" height="16" viewBox="0 0 16 16"><circle cx="8" cy="8" r="6.500" fill="#c9606b"/><path d="M8 8h6.500A6.500 6.500 0 0 1 8 14.500z" fill="#2c2c2c"/><path d="M8 8H1.500A6.500 6.500 0 0 0 8 14.500z" fill="#e8e8e8" opacity=".0"/></svg>
<div class="a" style="left:1590px;top:833px;width:26px;height:27px;background:#2c2c2c;border-radius:5px 0 0 5px"></div>
<svg class="ic" style="left:1595px;top:838px" width="16" height="16" viewBox="0 0 16 16"><rect x="2" y="2" width="12" height="12" fill="#d0606b"/><path d="M2 2h3v3H2zM8 2h3v3H8zM5 5h3v3H5zM11 5h3v3h-3zM2 8h3v3H2zM8 8h3v3H8zM5 11h3v3H5zM11 11h3v3h-3z" fill="#232323"/></svg>
<svg class="ic" style="left:1626px;top:410px" width="16" height="16" viewBox="0 0 16 16"><path d="M4.500 3L1.500 10a3 3 0 0 0 6 0z" fill="#ddd"/><circle cx="12.500" cy="3.500" r="1.800" fill="#ddd"/><circle cx="10" cy="11" r="3.200" fill="#424242" stroke="#ddd" stroke-width="1.200"/></svg>
<div class="t" style="left:1650px;top:414px;font-size:11.3px;color:#e6e6e6">Scene</div>
<svg class="ic" style="left:1896px;top:410px" width="16" height="16" viewBox="0 0 16 16"><path d="M9 2l5 5-2 .5-3 3 .5 2.500-1 1-6-6 1-1 2.500.5 3-3z" fill="none" stroke="#999" stroke-width="1"/><path d="M5 11l-3.500 3.500" stroke="#999"/></svg>
<svg class="ic" style="left:1624px;top:444px" width="8" height="7" viewBox="0 0 8 7"><path d="M.5 .5h7L4 6.500z" fill="#aaa"/></svg>
<div class="t" style="left:1638px;top:443px;font-size:12.5px;color:#e6e6e6">Scene</div>
<div class="t" style="left:1694px;top:474px;font-size:11.3px;color:#e6e6e6">Camera</div>
<div class="t" style="left:1642px;top:499px;font-size:11.3px;color:#e6e6e6">Background Scene</div>
<div class="t" style="left:1680px;top:524px;font-size:11.3px;color:#e6e6e6">Active Clip</div>
<div class="bt" style="left:1745px;top:469px;width:166px;height:18px;background:#1d1d1d"></div>
<div class="bt" style="left:1745px;top:494px;width:166px;height:18px;background:#1d1d1d"></div>
<div class="bt" style="left:1745px;top:519px;width:166px;height:18px;background:#1d1d1d"></div>
<svg class="ic" style="left:1748px;top:470px" width="16" height="16" viewBox="0 0 16 16"><path d="M1.500 5V1.500H5M11 1.500h3.500V5M14.500 11v3.500H11M5 14.500H1.500V11" fill="none" stroke="#ddd" stroke-width="1"/><rect x="4" y="4" width="8" height="8" fill="#ddd"/></svg>
<svg class="ic" style="left:1892px;top:470px" width="16" height="16" viewBox="0 0 16 16"><path d="M2 14l1-3 6-6 2 2-6 6zM9 5l2-2 2 2-2 2" fill="none" stroke="#ddd" stroke-width="1.100"/><path d="M11 3l1.500-1.500 2 2L13 5z" fill="#ddd"/></svg>
<svg class="ic" style="left:1748px;top:495px" width="16" height="16" viewBox="0 0 16 16"><path d="M4.500 3L1.500 10a3 3 0 0 0 6 0z" fill="#ddd"/><circle cx="12.500" cy="3.500" r="1.800" fill="#ddd"/><circle cx="10" cy="11" r="3.200" fill="#1d1d1d" stroke="#ddd" stroke-width="1.200"/></svg>
<svg class="ic" style="left:1748px;top:520px" width="16" height="16" viewBox="0 0 16 16"><rect x="3" y="8" width="10" height="6" fill="#ddd"/><path d="M3 5h2M6 4.500h2M9 4h2M12 3.500h1" stroke="#ddd" stroke-width="1.500"/><path d="M3 5v3" stroke="#ddd" stroke-width="1"/></svg>
<svg class="ic" style="left:1625px;top:554px" width="7" height="8" viewBox="0 0 7 8"><path d="M.5 .5v7l6-3.500z" fill="#aaa"/></svg>
<div class="t" style="left:1638px;top:553px;font-size:12.5px;color:#e6e6e6">Units</div>
<svg class="ic" style="left:1625px;top:578px" width="7" height="8" viewBox="0 0 7 8"><path d="M.5 .5v7l6-3.500z" fill="#aaa"/></svg>
<div class="a" style="left:1637px;top:576px;width:12px;height:12px;background:#4772b3;border-radius:2px"></div>
<svg class="ic" style="left:1637px;top:576px" width="12" height="12" viewBox="0 0 12 12"><path d="M2.500 6l2.500 2.500 4.500-5" fill="none" stroke="#fff" stroke-width="1.600"/></svg>
<div class="t" style="left:1652px;top:577px;font-size:12.5px;color:#e6e6e6">Gravity</div>
<svg class="ic" style="left:1625px;top:602px" width="7" height="8" viewBox="0 0 7 8"><path d="M.5 .5v7l6-3.500z" fill="#aaa"/></svg>
<div class="t" style="left:1638px;top:601px;font-size:12.5px;color:#e6e6e6">Keying Sets</div>
<svg class="ic" style="left:1625px;top:626px" width="7" height="8" viewBox="0 0 7 8"><path d="M.5 .5v7l6-3.500z" fill="#aaa"/></svg>
<div class="t" style="left:1638px;top:625px;font-size:12.5px;color:#e6e6e6">Audio</div>
<svg class="ic" style="left:1625px;top:650px" width="7" height="8" viewBox="0 0 7 8"><path d="M.5 .5v7l6-3.500z" fill="#aaa"/></svg>
<div class="t" style="left:1638px;top:649px;font-size:12.5px;color:#e6e6e6">Rigid Body World</div>
<svg class="ic" style="left:1625px;top:674px" width="7" height="8" viewBox="0 0 7 8"><path d="M.5 .5v7l6-3.500z" fill="#aaa"/></svg>
<div class="t" style="left:1638px;top:673px;font-size:12.5px;color:#e6e6e6">Custom Properties</div>
<svg class="ic" style="left:1899px;top:445px" width="14" height="6" viewBox="0 0 14 6"><path d="M1 1h1M4 1h1M7 1h1M10 1h1M1 4h1M4 4h1M7 4h1M10 4h1" stroke="#777" stroke-width="1.200"/></svg>
<svg class="ic" style="left:1899px;top:555px" width="14" height="6" viewBox="0 0 14 6"><path d="M1 1h1M4 1h1M7 1h1M10 1h1M1 4h1M4 4h1M7 4h1M10 4h1" stroke="#777" stroke-width="1.200"/></svg>
<svg class="ic" style="left:1899px;top:579px" width="14" height="6" viewBox="0 0 14 6"><path d="M1 1h1M4 1h1M7 1h1M10 1h1M1 4h1M4 4h1M7 4h1M10 4h1" stroke="#777" stroke-width="1.200"/></svg>
<svg class="ic" style="left:1899px;top:603px" width="14" height="6" viewBox="0 0 14 6"><path d="M1 1h1M4 1h1M7 1h1M10 1h1M1 4h1M4 4h1M7 4h1M10 4h1" stroke="#777" stroke-width="1.200"/></svg>
<svg class="ic" style="left:1899px;top:627px" width="14" height="6" viewBox="0 0 14 6"><path d="M1 1h1M4 1h1M7 1h1M10 1h1M1 4h1M4 4h1M7 4h1M10 4h1" stroke="#777" stroke-width="1.200"/></svg>
<svg class="ic" style="left:1899px;top:651px" width="14" height="6" viewBox="0 0 14 6"><path d="M1 1h1M4 1h1M7 1h1M10 1h1M1 4h1M4 4h1M7 4h1M10 4h1" stroke="#777" stroke-width="1.200"/></svg>
<svg class="ic" style="left:1899px;top:675px" width="14" height="6" viewBox="0 0 14 6"><path d="M1 1h1M4 1h1M7 1h1M10 1h1M1 4h1M4 4h1M7 4h1M10 4h1" stroke="#777" stroke-width="1.200"/></svg>
<!-- timeline -->
<div class="a" style="left:0;top:943px;width:1585px;height:69px;background:#3d3d3d;border-radius:6px;overflow:hidden">
 <div class="a" style="left:0;top:0;width:1585px;height:25px;background:#333333"></div>
 <div class="a" style="left:0;top:25px;width:1585px;height:22px;background:#2a2a2a"></div>
 <div class="a" style="left:1528px;top:47px;width:57px;height:22px;background:#353535"></div>
</div>
<svg class="a" style="left:0;top:990px" width="1585" height="22" viewBox="0 0 1585 22">
<path d="M22.9 0v22M81.9 0v22M140.9 0v22M199.9 0v22M258.9 0v22M317.9 0v22M376.9 0v22M435.9 0v22M494.9 0v22M553.9 0v22M612.9 0v22M671.9 0v22M730.9 0v22M789.9 0v22M848.9 0v22M907.9 0v22M966.9 0v22M1025.9 0v22M1084.9 0v22M1143.9 0v22M1202.9 0v22M1261.9 0v22M1320.9 0v22M1379.9 0v22M1438.9 0v22M1497.9 0v22M1556.9 0v22" stroke="#333" stroke-width="1"/><path d="M52.4 0v22M111.4 0v22M170.4 0v22M229.4 0v22M288.4 0v22M347.4 0v22M406.4 0v22M465.4 0v22M524.4 0v22M583.4 0v22M642.4 0v22M701.4 0v22M760.4 0v22M819.4 0v22M878.4 0v22M937.4 0v22M996.4 0v22M1055.4 0v22M1114.4 0v22M1173.4 0v22M1232.4 0v22M1291.4 0v22M1350.4 0v22M1409.4 0v22M1468.4 0v22M1527.4 0v22" stroke="#262626" stroke-width="1.100"/>
<rect x="9" y="12" width="1568" height="8" rx="4" fill="#676767"/><circle cx="13" cy="16" r="3" fill="#555"/><circle cx="1573" cy="16" r="3" fill="#555"/>
<path d="M1527.800 0v22" stroke="#1a1a1a" stroke-width="1.200"/>
</svg>

<div class="t" style="left:91.8px;width:40px;text-align:center;top:976px;font-size:11.3px;color:#c9c9c9;letter-spacing:.8px">10</div>
<div class="t" style="left:150.8px;width:40px;text-align:center;top:976px;font-size:11.3px;color:#c9c9c9;letter-spacing:.8px">20</div>
<div class="t" style="left:209.8px;width:40px;text-align:center;top:976px;font-size:11.3px;color:#c9c9c9;letter-spacing:.8px">30</div>
<div class="t" style="left:268.8px;width:40px;text-align:center;top:976px;font-size:11.3px;color:#c9c9c9;letter-spacing:.8px">40</div>
<div class="t" style="left:327.8px;width:40px;text-align:center;top:976px;font-size:11.3px;color:#c9c9c9;letter-spacing:.8px">50</div>
<div class="t" style="left:386.8px;width:40px;text-align:center;top:976px;font-size:11.3px;color:#c9c9c9;letter-spacing:.8px">60</div>
<div class="t" style="left:445.8px;width:40px;text-align:center;top:976px;font-size:11.3px;color:#c9c9c9;letter-spacing:.8px">70</div>
<div class="t" style="left:504.8px;width:40px;text-align:center;top:976px;font-size:11.3px;color:#c9c9c9;letter-spacing:.8px">80</div>
<div class="t" style="left:563.8px;width:40px;text-align:center;top:976px;font-size:11.3px;color:#c9c9c9;letter-spacing:.8px">90</div>
<div class="t" style="left:622.8px;width:40px;text-align:center;top:976px;font-size:11.3px;color:#c9c9c9;letter-spacing:.8px">100</div>
<div class="t" style="left:681.8px;width:40px;text-align:center;top:976px;font-size:11.3px;color:#c9c9c9;letter-spacing:.8px">110</div>
<div class="t" style="left:740.8px;width:40px;text-align:center;top:976px;font-size:11.3px;color:#c9c9c9;letter-spacing:.8px">120</div>
<div class="t" style="left:799.8px;width:40px;text-align:center;top:976px;font-size:11.3px;color:#c9c9c9;letter-spacing:.8px">130</div>
<div class="t" style="left:858.8px;width:40px;text-align:center;top:976px;font-size:11.3px;color:#c9c9c9;letter-spacing:.8px">140</div>
<div class="t" style="left:917.8px;width:40px;text-align:center;top:976px;font-size:11.3px;color:#c9c9c9;letter-spacing:.8px">150</div>
<div class="t" style="left:976.8px;width:40px;text-align:center;top:976px;font-size:11.3px;color:#c9c9c9;letter-spacing:.8px">160</div>
<div class="t" style="left:1035.8px;width:40px;text-align:center;top:976px;font-size:11.3px;color:#c9c9c9;letter-spacing:.8px">170</div>
<div class="t" style="left:1094.8px;width:40px;text-align:center;top:976px;font-size:11.3px;color:#c9c9c9;letter-spacing:.8px">180</div>
<div class="t" style="left:1153.8px;width:40px;text-align:center;top:976px;font-size:11.3px;color:#c9c9c9;letter-spacing:.8px">190</div>
<div class="t" style="left:1212.8px;width:40px;text-align:center;top:976px;font-size:11.3px;color:#c9c9c9;letter-spacing:.8px">200</div>
<div class="t" style="left:1271.8px;width:40px;text-align:center;top:976px;font-size:11.3px;color:#c9c9c9;letter-spacing:.8px">210</div>
<div class="t" style="left:1330.8px;width:40px;text-align:center;top:976px;font-size:11.3px;color:#c9c9c9;letter-spacing:.8px">220</div>
<div class="t" style="left:1389.8px;width:40px;text-align:center;top:976px;font-size:11.3px;color:#c9c9c9;letter-spacing:.8px">230</div>
<div class="t" style="left:1448.8px;width:40px;text-align:center;top:976px;font-size:11.3px;color:#c9c9c9;letter-spacing:.8px">240</div>
<div class="t" style="left:1507.8px;width:40px;text-align:center;top:976px;font-size:11.3px;color:#c9c9c9;letter-spacing:.8px">250</div>
<div class="a" style="left:47px;top:971px;width:23px;height:16px;background:#4772b3;border-radius:4px"></div>
<div class="t" style="left:47px;width:23px;text-align:center;top:975px;font-size:11.3px;color:#fff">1</div>
<div class="a" style="left:57.500px;top:987px;width:2px;height:14px;background:#4772b3"></div><div class="a" style="left:57.500px;top:1009px;width:2px;height:2px;background:#4772b3"></div>
<div class="a" style="left:0px;top:982px;width:8px;height:15px;background:#262626;border-radius:0 4px 4px 0"></div>
<svg class="ic" style="left:0px;top:984px" width="7" height="10" viewBox="0 0 7 10"><path d="M1.500 1l4 4-4 4" fill="none" stroke="#888" stroke-width="1"/></svg>
<div class="a" style="left:1576px;top:982px;width:9px;height:15px;background:#262626;border-radius:4px 0 0 4px"></div>
<svg class="ic" style="left:1577px;top:984px" width="7" height="10" viewBox="0 0 7 10"><path d="M5.500 1l-4 4 4 4" fill="none" stroke="#888" stroke-width="1"/></svg>
<!-- timeline header -->
<div class="bt" style="left:9px;top:947px;width:30px;height:18px;background:#2a2a2a"></div>
<svg class="ic" style="left:12px;top:948px" width="16" height="16" viewBox="0 0 16 16"><circle cx="8" cy="8" r="7" fill="#ddd"/><path d="M9.500 3.500L6 8l3.500 4.500" fill="none" stroke="#2a2a2a" stroke-width="1.800"/></svg>
<svg class="ic" style="left:29px;top:954px" width="8" height="6" viewBox="0 0 8 6"><path d="M1 1.500l3 3 3-3" fill="none" stroke="#ddd" stroke-width="1.200"/></svg>
<div class="bt" style="left:45px;top:947px;width:128px;height:18px;background:#2a2a2a"></div>
<div class="a" style="left:114px;top:947px;width:1px;height:18px;background:#1e1e1e"></div>
<div class="t" style="left:53px;top:952px;font-size:11.3px">Playback</div>
<svg class="ic" style="left:104px;top:954px" width="8" height="6" viewBox="0 0 8 6"><path d="M1 1.500l3 3 3-3" fill="none" stroke="#ddd" stroke-width="1.200"/></svg>
<div class="t" style="left:122px;top:952px;font-size:11.3px">Keying</div>
<svg class="ic" style="left:163px;top:954px" width="8" height="6" viewBox="0 0 8 6"><path d="M1 1.500l3 3 3-3" fill="none" stroke="#ddd" stroke-width="1.200"/></svg>
<div class="t" style="left:183px;top:952px;font-size:11.3px">View</div>
<div class="t" style="left:223px;top:952px;font-size:11.3px">Marker</div>
<div class="bt" style="left:701px;top:947px;width:38px;height:18px;background:#2a2a2a"></div>
<div class="a" style="left:701px;top:947px;width:18px;height:18px;background:#545454;border-radius:4px 0 0 4px"></div>
<svg class="ic" style="left:701px;top:947px" width="38" height="18" viewBox="0 0 38 18"><circle cx="9" cy="9" r="4" fill="#ddd"/><path d="M25.500 7.500l2.500 2.500 2.500-2.500" fill="none" stroke="#666" stroke-width="1"/></svg>
<div class="bt" style="left:746px;top:947px;width:118px;height:18px;background:#545454"></div>
<svg class="ic" style="left:746px;top:947px" width="118" height="18" viewBox="0 0 118 18">
<path d="M5.500 4.500h1.800v9H5.500zM13 4.500v9L8 9z" fill="#ddd"/>
<path d="M25.500 5l4 4-4 4-4-4zM36 4.500v9L31.500 9z" fill="#ddd"/>
<path d="M54.500 4.500v9L47 9z" fill="#ddd"/>
<path d="M63.500 4.500v9L71 9z" fill="#ddd"/>
<path d="M81.500 4.500v9L86 9zM91.500 5l4 4-4 4-4-4z" fill="#ddd"/>
<path d="M105 4.500v9L110 9zM110.700 4.500h1.800v9h-1.800z" fill="#ddd"/>
<path d="M19.500 0v18M39 0v18M58.500 0v18M78 0v18M97.500 0v18" stroke="#4a4a4a" stroke-width="1"/>
</svg>
<div class="bt" style="left:1308px;top:947px;width:74px;height:18px;background:#545454"></div>
<div class="t" style="left:1308px;width:74px;text-align:center;top:952px;font-size:11.3px">1</div>
<div class="bt" style="left:1388px;top:947px;width:190px;height:18px;background:#545454"></div>
<div class="a" style="left:1406px;top:947px;width:1px;height:18px;background:#4a4a4a"></div>
<div class="a" style="left:1493px;top:947px;width:1px;height:18px;background:#4a4a4a"></div>
<svg class="ic" style="left:1389px;top:948px" width="16" height="16" viewBox="0 0 16 16"><circle cx="8" cy="9" r="5.500" fill="none" stroke="#ccc" stroke-width="1.100"/><path d="M8 5.500V9h2.500M6.500 2h3M3 4l1.500-1.500M13 4l-1.500-1.500" fill="none" stroke="#ccc" stroke-width="1.100"/></svg>
<div class="t" style="left:1422px;top:952px;font-size:11.3px">Start</div>
<div class="t" style="left:1474px;top:952px;font-size:11.3px">1</div>
<div class="t" style="left:1510px;top:952px;font-size:11.3px">End</div>
<div class="t" style="left:1545px;top:952px;font-size:11.3px">250</div>
<!-- status bar -->
<svg class="ic" style="left:9px;top:1015px" width="14" height="17" viewBox="0 0 14 17"><rect x="1.500" y="1.500" width="10" height="14" rx="4" fill="none" stroke="#bbb" stroke-width="1.100"/><path d="M1.500 8V5.500a4 4 0 0 1 4-4h1V8z" fill="#bbb"/></svg>
<div class="t" style="left:34px;top:1019px;font-size:11.3px;color:#c9c9c9">Select</div>
<svg class="ic" style="left:76px;top:1015px" width="18" height="17" viewBox="0 0 18 17"><rect x="1.500" y="1.500" width="10" height="14" rx="4" fill="none" stroke="#bbb" stroke-width="1.100"/><path d="M1.500 8V5.500a4 4 0 0 1 4-4h1V8z" fill="#bbb"/><path d="M14.500 2v6M16.500 1v4" stroke="#bbb" stroke-width="1"/></svg>
<div class="t" style="left:100px;top:1019px;font-size:11.3px;color:#c9c9c9">Box Select</div>
<svg class="ic" style="left:247px;top:1015px" width="14" height="17" viewBox="0 0 14 17"><rect x="1.500" y="1.500" width="10" height="14" rx="4" fill="none" stroke="#bbb" stroke-width="1.100"/><rect x="5.500" y="3.500" width="2" height="5" fill="#bbb"/></svg>
<div class="t" style="left:270px;top:1019px;font-size:11.3px;color:#c9c9c9">Rotate View</div>
<svg class="ic" style="left:483px;top:1015px" width="14" height="17" viewBox="0 0 14 17"><rect x="1.500" y="1.500" width="10" height="14" rx="4" fill="none" stroke="#bbb" stroke-width="1.100"/><path d="M11.500 8V5.500a4 4 0 0 0-4-4h-1V8z" fill="#bbb"/></svg>
<div class="t" style="left:506px;top:1019px;font-size:11.3px;color:#c9c9c9">Object Context Menu</div>
<div class="t" style="left:1860px;width:51px;text-align:right;top:1019px;font-size:11.3px;color:#c9c9c9;letter-spacing:.6px">2.93.5</div>
<!-- dock icons -->
<svg class="a" style="left:332px;top:1033px" width="1256" height="47" viewBox="332 1033 1256 47">
<defs>
 <linearGradient id="fnd" x1="0" x2="1"><stop offset=".5" stop-color="#1a8cf0"/><stop offset=".5" stop-color="#e8f0f8"/></linearGradient>
 <linearGradient id="lp" x1="0" y1="0" x2="0" y2="1"><stop offset="0" stop-color="#d0d4d8"/><stop offset="1" stop-color="#8a9096"/></linearGradient>
 <linearGradient id="ft" x1="0" y1="0" x2="0" y2="1"><stop offset="0" stop-color="#5bf675"/><stop offset="1" stop-color="#0bd02a"/></linearGradient>
 <linearGradient id="msg" x1="0" y1="0" x2="0" y2="1"><stop offset="0" stop-color="#5ac8fa"/><stop offset="1" stop-color="#0a7aff"/></linearGradient>
 <linearGradient id="pod" x1="0" y1="0" x2="0" y2="1"><stop offset="0" stop-color="#d56ef5"/><stop offset="1" stop-color="#8a2bd0"/></linearGradient>
 <linearGradient id="aps" x1="0" y1="0" x2="0" y2="1"><stop offset="0" stop-color="#1ec0fc"/><stop offset="1" stop-color="#1a6ef0"/></linearGradient>
 <linearGradient id="ocu" x1="0" y1="0" x2="1" y2="1"><stop offset="0" stop-color="#4a1fa8"/><stop offset=".5" stop-color="#2a2a9a"/><stop offset="1" stop-color="#6ac8f0"/></linearGradient>
 <linearGradient id="saf" x1="0" y1="0" x2="0" y2="1"><stop offset="0" stop-color="#36c2fa"/><stop offset="1" stop-color="#1f60e0"/></linearGradient>
 <linearGradient id="rd" x1="0" y1="0" x2="0" y2="1"><stop offset="0" stop-color="#f05a40"/><stop offset="1" stop-color="#c81e1e"/></linearGradient>
</defs>
<rect x="332" y="1033" width="1256" height="50" rx="6" fill="#757573"/>
<!-- finder -->
<rect x="339" y="1041" width="30" height="28" rx="3" fill="url(#fnd)"/>
<path d="M344 1060c5 4 15 4 20 0" fill="none" stroke="#111" stroke-width="1.200"/><path d="M348 1047v3M360 1047v3" stroke="#111" stroke-width="1.200"/>
<circle cx="354" cy="1076" r="1.400" fill="#111"/>
<!-- launchpad -->
<circle cx="392" cy="1055" r="16" fill="url(#lp)"/><circle cx="392" cy="1055" r="14" fill="#a4aaae"/>
<path d="M384 1065c0-6 4-13 15-18-2 9-7 15-13 17z" fill="#2f3336"/><path d="M386 1058l-3 2 2 2zM390 1064l-1 3 3-1z" fill="#2f3336"/><circle cx="393" cy="1054" r="1.600" fill="#8a9096"/>
<!-- mail -->
<rect x="417" y="1040" width="24" height="30" fill="#fff" transform="rotate(-6 429 1055)"/>
<rect x="419.500" y="1043" width="19" height="24" fill="#4a90e0" transform="rotate(-6 429 1055)"/><rect x="419.500" y="1058" width="19" height="9" fill="#a8d0f0" transform="rotate(-6 429 1055)"/>
<path d="M423 1050l6 5 6 8-8-4z" fill="#8a5a2a"/>
<!-- facetime -->
<rect x="452" y="1041" width="28" height="27" rx="6" fill="url(#ft)"/><rect x="456" y="1049" width="12" height="10" rx="2" fill="#eee"/><circle cx="474" cy="1063" r="6" fill="#eee"/><path d="M471 1061c1 3 3 5 6 5" stroke="#1a1" stroke-width="2" fill="none"/>
<!-- messages -->
<ellipse cx="505" cy="1053" rx="15" ry="12" fill="url(#msg)"/><path d="M496 1062l-3 6 8-3z" fill="#0a7aff"/><ellipse cx="512" cy="1062" rx="9" ry="6.500" fill="#e8f0f8"/><circle cx="508" cy="1062" r="1.100" fill="#1a4aa0"/><circle cx="512" cy="1062" r="1.100" fill="#1a4aa0"/><circle cx="516" cy="1062" r="1.100" fill="#1a4aa0"/>
<!-- maps -->
<rect x="529" y="1041" width="26" height="28" fill="#f0ece0" transform="rotate(-8 542 1055)"/><path d="M533 1045l18-2 3 12-16 4z" fill="#7ac860"/><path d="M536 1045l4 22" stroke="#3a7ae0" stroke-width="3"/><path d="M530 1055l10 1" stroke="#f8c040" stroke-width="3"/><circle cx="551" cy="1063" r="6.500" fill="#f4f4f4" stroke="#bbb"/>
<!-- photos -->
<circle cx="582" cy="1055" r="15.600" fill="#f4f4f4"/>
<g transform="translate(582 1055)" opacity=".92"><ellipse cx="0" cy="-6.500" rx="4.300" ry="7" fill="#f7a428" opacity=".85" transform="rotate(0)"/><ellipse cx="0" cy="-6.500" rx="4.300" ry="7" fill="#f8d23a" opacity=".85" transform="rotate(45)"/><ellipse cx="0" cy="-6.500" rx="4.300" ry="7" fill="#8ad04a" opacity=".85" transform="rotate(90)"/><ellipse cx="0" cy="-6.500" rx="4.300" ry="7" fill="#3ab8a8" opacity=".85" transform="rotate(135)"/><ellipse cx="0" cy="-6.500" rx="4.300" ry="7" fill="#4a8ae8" opacity=".85" transform="rotate(180)"/><ellipse cx="0" cy="-6.500" rx="4.300" ry="7" fill="#9a6ad8" opacity=".85" transform="rotate(225)"/><ellipse cx="0" cy="-6.500" rx="4.300" ry="7" fill="#d85aa0" opacity=".85" transform="rotate(270)"/><ellipse cx="0" cy="-6.500" rx="4.300" ry="7" fill="#f05a40" opacity=".85" transform="rotate(315)"/></g>
<!-- contacts -->
<rect x="606" y="1038" width="26" height="33" rx="3" fill="#b07a3e" transform="rotate(-6 619 1055)"/><circle cx="619" cy="1052" r="6" fill="none" stroke="#9a6a34" stroke-width="1.500"/><rect x="630" y="1045" width="3" height="20" fill="#6ab0e0"/>
<!-- calendar -->
<rect x="643" y="1039" width="27" height="31" fill="#fff" transform="rotate(-5 656 1055)"/><rect x="643" y="1039" width="27" height="8" fill="#e84a3a" transform="rotate(-5 656 1055)"/><text x="657" y="1066" font-size="16" text-anchor="middle" fill="#222" font-family="Liberation Sans" transform="rotate(-5 656 1055)">17</text>
<!-- reminders -->
<rect x="684" y="1039" width="25" height="31" rx="2" fill="#fafafa" transform="rotate(-6 696 1055)"/><circle cx="687" cy="1047" r="1.600" fill="#3a7ae0"/><circle cx="687" cy="1052" r="1.600" fill="#e84a3a"/><circle cx="688" cy="1057" r="1.600" fill="#f09a2a"/><circle cx="689" cy="1062" r="1.600" fill="#333"/><path d="M691 1046h14M691 1051h14M692 1056h14M693 1061h14" stroke="#ccc" stroke-width=".8"/>
<!-- notes -->
<rect x="721" y="1040" width="26" height="31" fill="#fcfaf0" transform="rotate(-6 734 1055)"/><rect x="721" y="1040" width="26" height="5" fill="#f8d040" transform="rotate(-6 734 1055)"/>
<!-- music -->
<circle cx="772" cy="1055" r="15.600" fill="#f6f6f8"/><path d="M766 1063v-13l12-3v12" fill="none" stroke="#f0406a" stroke-width="2.200"/><circle cx="764" cy="1063" r="3" fill="#8a6af0"/><circle cx="776" cy="1060" r="3" fill="#3aa0f0"/>
<!-- podcasts -->
<circle cx="810" cy="1055" r="15.600" fill="url(#pod)"/><circle cx="810" cy="1052" r="9" fill="none" stroke="#fff" stroke-width="1.600"/><circle cx="810" cy="1051" r="3" fill="#fff"/><rect x="808" y="1055" width="4" height="10" rx="2" fill="#fff"/>
<!-- tv -->
<circle cx="848" cy="1055" r="15.600" fill="#111"/><text x="851" y="1060" font-size="12" text-anchor="middle" fill="#fff" font-family="Liberation Sans" font-weight="bold">&#63743;tv</text><path d="M838 1056c0-3 3-4 4-3 1-1 4 0 4 3 0 3-2 5-4 4-2 1-4-1-4-4z" fill="#fff"/>
<!-- app store -->
<circle cx="886" cy="1055" r="15.600" fill="url(#aps)"/><path d="M879 1064l8-15M893 1064l-8-15M877 1059h18" stroke="#fff" stroke-width="2.200"/>
<circle cx="897.500" cy="1043.500" r="7" fill="#e8303a"/><text x="897.500" y="1047.500" font-size="10" text-anchor="middle" fill="#fff" font-family="Liberation Sans">2</text>
<!-- sys prefs -->
<rect x="909" y="1040" width="30" height="30" rx="3" fill="#8a8e92"/><circle cx="924" cy="1055" r="12" fill="#444"/><circle cx="924" cy="1055" r="9" fill="#aaa"/><circle cx="924" cy="1055" r="4" fill="#444"/><path d="M924 1055v-9M924 1055l8 5M924 1055l-8 5" stroke="#444" stroke-width="2"/>
<circle cx="935" cy="1043.500" r="7" fill="#e8303a"/><text x="935" y="1047.500" font-size="10" text-anchor="middle" fill="#fff" font-family="Liberation Sans">1</text>
<!-- sublime -->
<rect x="948" y="1040" width="28" height="29" rx="5" fill="#3a3a3a"/><path d="M953 1052l16-5v5l-16 5zM955 1057l16 5v-5l-16-5z" fill="#f89a20"/>
<!-- remote desktop -->
<rect x="985" y="1040" width="29" height="29" rx="2" fill="url(#rd)"/><rect x="991" y="1047" width="13" height="10" rx="1" fill="none" stroke="#fff" stroke-width="1.300"/><circle cx="1005" cy="1060" r="5" fill="none" stroke="#fff" stroke-width="1.300"/>
<!-- vlc -->
<path d="M1038 1039l-7 25h14z" fill="#f88a1a"/><path d="M1034 1050h8l1 4h-10zM1032 1058h12l1 4h-14z" fill="#f4f4f4"/><path d="M1024 1064h28l-2 6h-24z" fill="#f07a10"/>
<!-- pixelmator -->
<rect x="1061" y="1040" width="29" height="29" rx="6" fill="#f2f2f2"/><circle cx="1072" cy="1055" r="7" fill="#f07a40"/><circle cx="1077" cy="1058" r="6" fill="#a05ad0" opacity=".8"/><circle cx="1074" cy="1061" r="5" fill="#e84a8a" opacity=".7"/><path d="M1088 1040l-9 30" stroke="#333" stroke-width="1.500"/>
<!-- audacity -->
<path d="M1099 1064v-10a15 15 0 0 1 30 0v10" fill="none" stroke="#1a2ad8" stroke-width="3"/><rect x="1097" y="1055" width="6" height="14" rx="2" fill="#1a2ad8"/><rect x="1125" y="1055" width="6" height="14" rx="2" fill="#1a2ad8"/><path d="M1104 1060h20" stroke="#f8c030" stroke-width="8"/><path d="M1106 1060h16" stroke="#e83a20" stroke-width="3"/>
<!-- pdf expert -->
<rect x="1136" y="1039" width="32" height="32" rx="2" fill="#e02a38"/><path d="M1139 1068l7-16 6 8 4-9 9 17z" fill="#fff"/><text x="1160" y="1048" font-size="6" fill="#fff" font-family="Liberation Sans" text-anchor="middle">PDF</text>
<!-- unity -->
<path d="M1190 1039l14 8v16l-14 8-14-8v-16z" fill="#e8e8e8"/><path d="M1190 1046l8 4.500v9l-8 4.500-8-4.500v-9z" fill="none" stroke="#222" stroke-width="3"/>
<!-- blender -->
<circle cx="1231" cy="1056" r="10" fill="#f07a10"/><circle cx="1231" cy="1056" r="6.500" fill="#fff"/><circle cx="1231" cy="1056" r="3.800" fill="#265787"/><path d="M1212 1063l13-10M1217 1052h9M1222 1045l8 5" stroke="#f07a10" stroke-width="3.200" stroke-linecap="round"/>
<circle cx="1228" cy="1075.500" r="1.400" fill="#111"/>
<!-- oculus -->
<rect x="1248" y="1037" width="36" height="36" fill="url(#ocu)"/><rect x="1256" y="1050" width="20" height="10" rx="5" fill="none" stroke="#fff" stroke-width="3"/>
<!-- safari -->
<circle cx="1304" cy="1055" r="16" fill="#f4f4f4"/><circle cx="1304" cy="1055" r="14" fill="url(#saf)"/><path d="M1313 1046l-7 11-4-4z" fill="#f03a3a"/><path d="M1295 1064l7-11 4 4z" fill="#fff"/>
<path d="M1331.500 1040v31" stroke="#333" stroke-width="1"/>
<!-- epic -->
<path d="M1344 1039h28v26l-14 9-14-9z" fill="#111"/><text x="1358" y="1056" font-size="11" font-weight="bold" fill="#fff" font-family="Liberation Sans" text-anchor="middle">EPIC</text><text x="1358" y="1064" font-size="5" fill="#fff" font-family="Liberation Sans" text-anchor="middle">GAMES</text>
<circle cx="1359" cy="1075.500" r="1.400" fill="#111"/>
<!-- chrome -->
<rect x="1382" y="1040" width="30" height="30" rx="6" fill="#f4f4f4"/><circle cx="1397" cy="1055" r="11" fill="#db4437"/><path d="M1397 1055l-9.500 5.500A11 11 0 0 1 1388 1049.500z" fill="#f4c20d"/><path d="M1397 1055L1387.500 1060.500A11 11 0 0 0 1408 1055z" fill="#0f9d58"/><path d="M1397 1055h11a11 11 0 0 1-1.500 5.500z" fill="#f4c20d"/><circle cx="1397" cy="1055" r="5" fill="#fff"/><circle cx="1397" cy="1055" r="3.800" fill="#4285f4"/>
<circle cx="1397" cy="1075.500" r="1.400" fill="#111"/>
<!-- whatsapp -->
<rect x="1420" y="1040" width="29" height="29" rx="6" fill="#2bd44a"/><circle cx="1434.500" cy="1054.500" r="9" fill="none" stroke="#fff" stroke-width="2"/><path d="M1427 1063l2-5 3 3z" fill="#fff"/>
<circle cx="1435" cy="1075.500" r="1.400" fill="#111"/>
<path d="M1463.500 1040v31" stroke="#333" stroke-width="1"/>
<!-- stack -->
<rect x="1477" y="1040" width="25" height="31" fill="#f4f4f4"/><rect x="1477" y="1042" width="17" height="29" rx="1" fill="#222"/><path d="M1495 1044l6 4v8l-6-2z" fill="#5ab0e0"/>
<!-- screenshot -->
<rect x="1511" y="1043" width="34" height="22" fill="#f4f4f4"/><path d="M1512 1046h6v18h-6z" fill="#e0d8d0"/><rect x="1531" y="1051" width="12" height="5" fill="#333"/><rect x="1534" y="1058" width="9" height="9" rx="2" fill="#2bd44a"/>
<!-- trash -->
<path d="M1554 1042h26l-3 30h-20z" fill="#d8d8d8" opacity=".9"/><ellipse cx="1567" cy="1042" rx="13" ry="3" fill="#eee"/><path d="M1558 1043l3-3 4 2 5-2 4 3" stroke="#555" stroke-width="1.500" fill="none"/>
</svg>

<!-- dock -->

</body></html>
